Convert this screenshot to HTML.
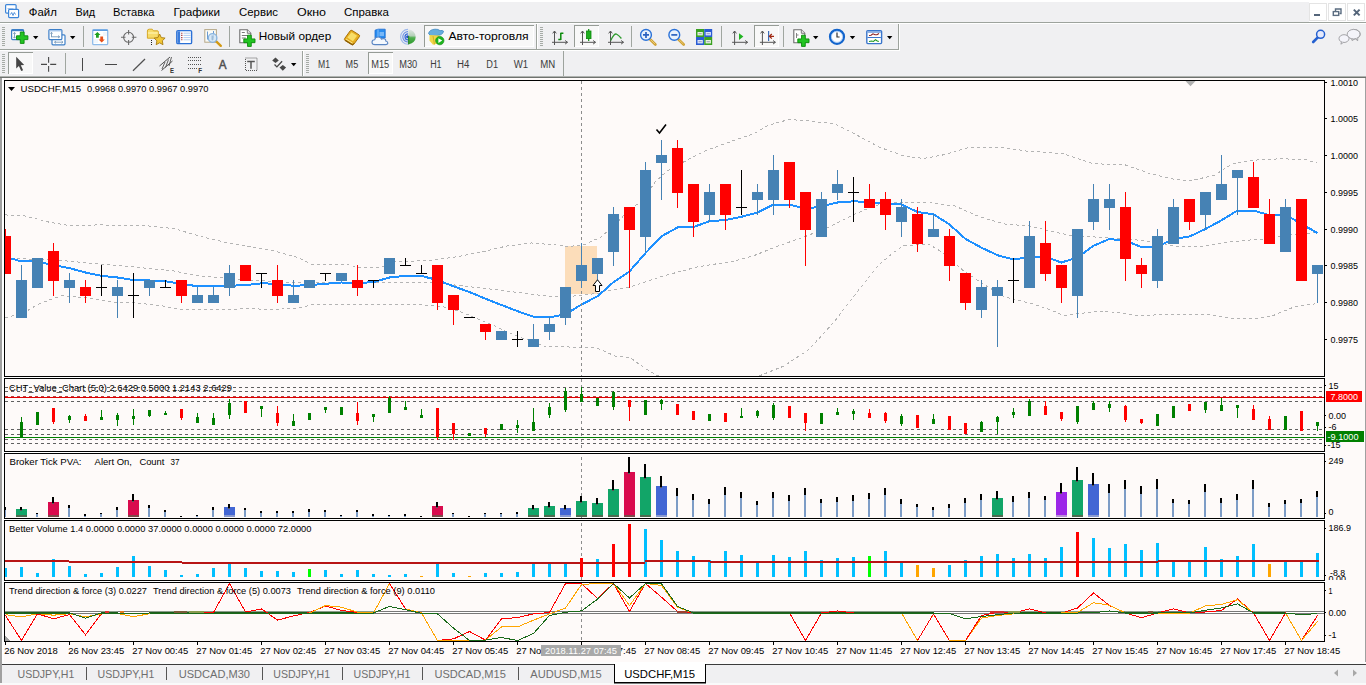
<!DOCTYPE html><html><head><meta charset="utf-8"><title>USDCHF,M15</title><style>html,body{margin:0;padding:0;background:#f0f0f0}body{width:1366px;height:685px;overflow:hidden}svg{display:block;font-family:"Liberation Sans",sans-serif}text{white-space:pre}</style></head><body><svg width="1366" height="685" viewBox="0 0 1366 685"><rect x="0" y="0" width="1366" height="685" fill="#f0f0f2"/><rect x="0" y="0" width="1366" height="2" fill="#ffffff"/><rect x="1309" y="0" width="57" height="22" fill="#ffffff"/><rect x="1309.5" y="3.5" width="17" height="17" fill="#fff" stroke="#e4e4e4" stroke-width="1"/><rect x="1328.5" y="3.5" width="17" height="17" fill="#fff" stroke="#e4e4e4" stroke-width="1"/><rect x="1347.5" y="3.5" width="17" height="17" fill="#fff" stroke="#e4e4e4" stroke-width="1"/><rect x="1314" y="14" width="6" height="2" fill="#54657a"/><g fill="none" stroke="#5a6c80" stroke-width="1.4"><path d="M1335.5,11 V9 H1341 V13.5 H1339.5"/><rect x="1333.3" y="11.6" width="5.4" height="3.8"/></g><path d="M1353.8,9.6 L1359.6,15.4 M1359.6,9.6 L1353.8,15.4" stroke="#54657a" stroke-width="2" fill="none"/><rect x="0" y="22" width="1366" height="1" fill="#9da39d"/><rect x="0" y="23" width="1366" height="1" fill="#ffffff"/><g fill="#fff" stroke="#3d85d8" stroke-width="1.2"><rect x="5.6" y="4.6" width="10.5" height="8.5" rx="1"/><rect x="8.6" y="9.3" width="10" height="8.3" rx="1"/></g><path d="M10.5,14.5 l1.2,-2 l1.3,3 l1.3,-3 l1.2,2" fill="none" stroke="#3d85d8" stroke-width="0.9"/><path d="M7.5,8.5 h6" stroke="#8ab4e8" stroke-width="0.8" fill="none"/><text x="28.8" y="15.7" font-size="11.6" fill="#000" textLength="28" lengthAdjust="spacingAndGlyphs">Файл</text><text x="75.5" y="15.7" font-size="11.6" fill="#000" textLength="19.7" lengthAdjust="spacingAndGlyphs">Вид</text><text x="113" y="15.7" font-size="11.6" fill="#000" textLength="41.5" lengthAdjust="spacingAndGlyphs">Вставка</text><text x="173.5" y="15.7" font-size="11.6" fill="#000" textLength="46.5" lengthAdjust="spacingAndGlyphs">Графики</text><text x="239" y="15.7" font-size="11.6" fill="#000" textLength="39" lengthAdjust="spacingAndGlyphs">Сервис</text><text x="297" y="15.7" font-size="11.6" fill="#000" textLength="29" lengthAdjust="spacingAndGlyphs">Окно</text><text x="344" y="15.7" font-size="11.6" fill="#000" textLength="45" lengthAdjust="spacingAndGlyphs">Справка</text><rect x="0" y="49" width="899" height="1" fill="#9da39d"/><rect x="0" y="50" width="899" height="1" fill="#ffffff"/><rect x="536" y="24" width="1" height="25" fill="#9da39d"/><rect x="537" y="24" width="1" height="25" fill="#fff"/><rect x="898" y="24" width="1" height="26" fill="#9da39d"/><rect x="899" y="24" width="1" height="27" fill="#fff"/><rect x="2" y="27" width="3" height="1" fill="#a6aba6"/><rect x="2" y="29" width="3" height="1" fill="#a6aba6"/><rect x="2" y="31" width="3" height="1" fill="#a6aba6"/><rect x="2" y="33" width="3" height="1" fill="#a6aba6"/><rect x="2" y="35" width="3" height="1" fill="#a6aba6"/><rect x="2" y="37" width="3" height="1" fill="#a6aba6"/><rect x="2" y="39" width="3" height="1" fill="#a6aba6"/><rect x="2" y="41" width="3" height="1" fill="#a6aba6"/><rect x="2" y="43" width="3" height="1" fill="#a6aba6"/><rect x="2" y="45" width="3" height="1" fill="#a6aba6"/><rect x="540" y="27" width="3" height="1" fill="#a6aba6"/><rect x="540" y="29" width="3" height="1" fill="#a6aba6"/><rect x="540" y="31" width="3" height="1" fill="#a6aba6"/><rect x="540" y="33" width="3" height="1" fill="#a6aba6"/><rect x="540" y="35" width="3" height="1" fill="#a6aba6"/><rect x="540" y="37" width="3" height="1" fill="#a6aba6"/><rect x="540" y="39" width="3" height="1" fill="#a6aba6"/><rect x="540" y="41" width="3" height="1" fill="#a6aba6"/><rect x="540" y="43" width="3" height="1" fill="#a6aba6"/><rect x="540" y="45" width="3" height="1" fill="#a6aba6"/><rect x="11.6" y="29.6" width="12" height="10" rx="1" fill="#fff" stroke="#3d7fc8" stroke-width="1.2"/><rect x="11.6" y="29.6" width="12" height="1.6" fill="#3d7fc8"/><path d="M14.5,32.5 v5.5 M13.3,33.8 l1.2,-1.4 l1.2,1.4 M13.3,36.8 l1.2,1.4 l1.2,-1.4" stroke="#7898b8" stroke-width="0.9" fill="none"/><path d="M20.3,32 h3.8000000000000003 v3.8000000000000003 h3.8000000000000003 v3.8000000000000003 h-3.8000000000000003 v3.8000000000000003 h-3.8000000000000003 v-3.8000000000000003 h-3.8000000000000003 v-3.8000000000000003 h3.8000000000000003 z" fill="#22c422" stroke="#0a8a0a" stroke-width="0.9"/><polygon points="33,36 38.4,36 35.7,39.2" fill="#000"/><g fill="#fff" stroke="#3d7fc8" stroke-width="1.2"><rect x="52" y="34.8" width="13" height="10" rx="1"/><rect x="48.9" y="29.6" width="13" height="10" rx="1"/></g><rect x="49.5" y="30.2" width="11.8" height="1.2" fill="#9cc0ea"/><path d="M51,36.8 h8.6 M58,35.6 l1.7,1.2 l-1.7,1.2 M51.5,32.4 v4.6 M50.4,33.6 l1.1,-1.3 l1.1,1.3" stroke="#7898b8" stroke-width="0.9" fill="none"/><path d="M54.5,42.2 h8.5 M56,41 l-1.5,1.2 l1.5,1.2 M61.5,41 l1.5,1.2 l-1.5,1.2" stroke="#7898b8" stroke-width="0.9" fill="none"/><polygon points="70,36 75.4,36 72.7,39.2" fill="#000"/><rect x="83" y="26" width="1" height="21" fill="#a0a6a0"/><rect x="92.7" y="29.6" width="15" height="15" rx="1.2" fill="#fff" stroke="#8ebbea" stroke-width="1.3"/><rect x="92.7" y="29.6" width="15" height="1.4" fill="#5e9de0"/><path d="M97.4,32 l3.1,3 h-1.7 v2.7 h-2.8 v-2.7 h-1.7 z" fill="#1fa01f"/><path d="M101.7,42.5 l3.1,-3 h-1.7 v-2.9 h-2.8 v2.9 h-1.7 z" fill="#e8501a"/><path d="M103.5,33 h3 M103.5,35 h3 M94.5,40 h3 M94.5,42 h3" stroke="#b8d4f0" stroke-width="0.8" stroke-dasharray="1 1"/><g fill="none" stroke="#6a6a6a" stroke-width="1.1"><circle cx="128.6" cy="37.3" r="5"/><path d="M128.6,30 v4.5 M128.6,40 v5 M121,37.3 h4.5 M131.8,37.3 h4.6"/></g><path d="M147.4,31 q0,-1.8 1.8,-1.8 h3 l1.3,1.6 h4 q0.8,0 0.8,0.8 v6.6 h-10.9 z" fill="#f7dc6a" stroke="#d6a828" stroke-width="1"/><path d="M147.9,33 h10" stroke="#fff3b0" stroke-width="1.2"/><path d="M159.6,34 l1.7,3.6 l3.8,0.5 l-2.8,2.7 l0.7,3.9 l-3.4,-1.9 l-3.4,1.9 l0.7,-3.9 l-2.8,-2.7 l3.8,-0.5 z" fill="#f2c838" stroke="#a87c10" stroke-width="0.9"/><path d="M151.5,40 v5.5" stroke="#222" stroke-width="1" stroke-dasharray="1 1"/><rect x="176.8" y="30.6" width="14.8" height="13" rx="1.2" fill="#fff" stroke="#2a70d6" stroke-width="1.4"/><rect x="177.5" y="31.3" width="2.6" height="11.6" fill="#3a7cdc"/><path d="M183.5,33.2 h7 M183.5,35.4 h7 M183.5,37.6 h7 M183.5,39.8 h7" stroke="#9cc0ee" stroke-width="0.8"/><path d="M181.2,33.2 h1.2 M181.2,35.4 h1.2 M181.2,37.6 h1.2 M181.2,39.8 h1.2" stroke="#a02020" stroke-width="1.1"/><rect x="204.8" y="29.6" width="11.6" height="12.6" fill="#fbfbf6" stroke="#b6a888" stroke-width="1"/><path d="M207.5,31.5 v8 M213.5,31 v7" stroke="#6a9ad0" stroke-width="1"/><path d="M216.2,41.4 l4.6,4.4" stroke="#d49a14" stroke-width="2.4" stroke-linecap="round"/><circle cx="212.6" cy="38" r="4.3" fill="#cfe4f6" fill-opacity="0.85" stroke="#88b4e0" stroke-width="1.3"/><path d="M211.5,35.5 v4 q1,2 2,0 v-4" fill="#9ebcd8" stroke="none"/><rect x="229" y="26" width="1" height="21" fill="#a0a6a0"/><path d="M239.8,29.8 h7.5 l3.5,3.5 v9.5 h-11 z" fill="#fff" stroke="#6e6e6e" stroke-width="1.1"/><path d="M247.3,29.8 v3.5 h3.5" fill="#e8e8e8" stroke="#6e6e6e" stroke-width="0.9"/><path d="M241.8,32.5 h3 M241.8,35.5 h6 M241.8,38 h4" stroke="#787878" stroke-width="1"/><path d="M247.53333333333333,35.2 h3.733333333333333 v3.733333333333333 h3.733333333333333 v3.733333333333333 h-3.733333333333333 v3.733333333333333 h-3.733333333333333 v-3.733333333333333 h-3.733333333333333 v-3.733333333333333 h3.733333333333333 z" fill="#22c422" stroke="#0a8a0a" stroke-width="0.9"/><text x="258.8" y="39.9" font-size="11.6" fill="#000" textLength="72.4" lengthAdjust="spacingAndGlyphs">Новый ордер</text><path d="M344.6,38.6 l5.6,-7.8 q0.8,-0.9 1.9,-0.3 l7,4.4 q0.9,0.8 0.3,1.8 l-5.6,7.6 q-0.8,0.9 -1.9,0.4 l-7,-4.3 q-0.9,-0.8 -0.3,-1.8 z" fill="#e6ae20" stroke="#a8720a" stroke-width="1"/><path d="M347.3,37.6 l4.2,-5.4 l5.6,3.6 l-4.2,5.4 z" fill="#f8de68"/><path d="M345.2,40.2 l7.2,4.6 l1.2,-1.4" stroke="#8a5c06" stroke-width="1.2" fill="none"/><path d="M346,39 l6.6,4.2" stroke="#fff0a8" stroke-width="0.8"/><path d="M375,30.2 l3,-1 h7.2 v8.8 h-10.2 z" fill="#2a8df0" stroke="#1a6cd0" stroke-width="0.8"/><path d="M378,29.4 v8" stroke="#9fd0ff" stroke-width="0.8"/><path d="M379.5,33 h4.5 M379.5,35 h4.5" stroke="#d8ecff" stroke-width="0.9"/><path d="M375,44.6 q-3,0 -3,-2.4 q0,-2.2 2.6,-2.4 q0.6,-2.8 3.6,-2.8 q2.6,0 3.4,2.2 q1.2,-1 2.8,-0.4 q1.6,0.6 1.4,2.2 q2,0.4 2,2 q0,1.6 -2.2,1.6 z" fill="#f4f8fd" stroke="#5a86c4" stroke-width="1.1"/><defs><linearGradient id="sg" x1="0" y1="0" x2="0" y2="1"><stop offset="0" stop-color="#dfe6e4"/><stop offset="0.42" stop-color="#b4d0b8"/><stop offset="0.56" stop-color="#4fae4f"/><stop offset="1" stop-color="#2f9a2f"/></linearGradient></defs><path d="M408.4,29.6 A7.3,7.3 0 0 1 408.4,44.2 Z" fill="url(#sg)"/><g fill="none" stroke="#3a6cd8"><path d="M408,29.4 A7.4,7.4 0 0 0 408,44.2" stroke="#9cb8ec" stroke-width="1.1"/><path d="M408,31.6 A5.2,5.2 0 0 0 408,42" stroke="#6a90e4" stroke-width="1.2"/><path d="M408,33.8 A3,3 0 0 0 408,39.8" stroke-width="1.3"/></g><circle cx="407.6" cy="36.8" r="1.5" fill="#2050c8"/><path d="M408.6,36 v8.4" stroke="#2e8a2e" stroke-width="1.3"/><rect x="424" y="25" width="110" height="22" fill="#f8f8f8"/><rect x="424" y="25" width="110" height="1" fill="#969c96"/><rect x="424" y="25" width="1" height="22" fill="#969c96"/><rect x="533" y="26" width="1" height="21" fill="#fff"/><rect x="425" y="46" width="109" height="1" fill="#fff"/><path d="M428.5,33.5 q1,-4 6.5,-4.3 q3.5,-0.3 5,1.5 q2.5,-0.8 3.6,0.6 q-0.5,2.5 -3,3.5 l-7,1.5 q-4,-0.4 -5.1,-2.8 z" fill="#66aede" stroke="#3c86c0" stroke-width="0.8"/><path d="M429.5,35 l10,0.5 l-1.5,8 l-5,1.2 l-3.5,-4 z" fill="#f0d648"/><path d="M433,36 l1.5,8.5" stroke="#c8a820" stroke-width="0.8"/><circle cx="439.8" cy="40.6" r="4.2" fill="#1fb41f" stroke="#128a12" stroke-width="0.6"/><path d="M438.4,38.2 v4.8 l3.8,-2.4 z" fill="#fff"/><text x="448.4" y="39.9" font-size="11.6" fill="#000" textLength="80.2" lengthAdjust="spacingAndGlyphs">Авто-торговля</text><g stroke="#555" stroke-width="1" fill="none"><path d="M554.5,31 v14 M552.0,42.3 h15.5"/><path d="M552.7,33.4 l1.8,-2.4 l1.8,2.4 M565.1,40.5 l2.4,1.8 l-2.4,1.8"/></g><path d="M560.8,32.8 v7.2 M558.3,39.5 h2.5 M560.8,33.3 h2.6" stroke="#0a8a0a" stroke-width="1.5" fill="none"/><rect x="574" y="25" width="25" height="22" fill="#f8f8f8"/><rect x="574" y="25" width="25" height="1" fill="#969c96"/><rect x="574" y="25" width="1" height="22" fill="#969c96"/><rect x="598" y="26" width="1" height="21" fill="#fff"/><rect x="575" y="46" width="24" height="1" fill="#fff"/><g stroke="#555" stroke-width="1" fill="none"><path d="M582.5,31 v14 M580.0,42.3 h15.5"/><path d="M580.7,33.4 l1.8,-2.4 l1.8,2.4 M593.1,40.5 l2.4,1.8 l-2.4,1.8"/></g><path d="M588.7,29 v12" stroke="#0a8a0a" stroke-width="1.2"/><rect x="586.5" y="31" width="4.5" height="7.6" fill="#1fae1f" stroke="#0a8a0a" stroke-width="0.8"/><g stroke="#555" stroke-width="1" fill="none"><path d="M610.5,31 v14 M608.0,42.3 h15.5"/><path d="M608.7,33.4 l1.8,-2.4 l1.8,2.4 M621.1,40.5 l2.4,1.8 l-2.4,1.8"/></g><path d="M610.8,40.5 q3.5,-8 6,-6.2 q2,1.2 4.6,4.2" stroke="#2e9a2e" stroke-width="1.3" fill="none"/><rect x="631" y="26" width="1" height="21" fill="#a0a6a0"/><path d="M650,39.3 l5.4,5.2" stroke="#cfa030" stroke-width="2.6" stroke-linecap="round"/><path d="M650.4,39.5 l4.8,4.6" stroke="#f0d890" stroke-width="0.8"/><circle cx="646" cy="34.9" r="5.4" fill="#e8f2fc" stroke="#2a72d8" stroke-width="1.4"/><path d="M643,34.9 h6 M646,31.9 v6" stroke="#2a62c0" stroke-width="1.7"/><path d="M678.3,39.3 l5.4,5.2" stroke="#cfa030" stroke-width="2.6" stroke-linecap="round"/><path d="M678.6999999999999,39.5 l4.8,4.6" stroke="#f0d890" stroke-width="0.8"/><circle cx="674.3" cy="34.9" r="5.4" fill="#e8f2fc" stroke="#2a72d8" stroke-width="1.4"/><path d="M671.3,34.9 h6" stroke="#2a62c0" stroke-width="1.7"/><rect x="696" y="29" width="8.2" height="8" fill="#3aa222"/><rect x="704.2" y="29" width="8" height="8" fill="#2a5cd4"/><rect x="696" y="37" width="8.2" height="8" fill="#2a5cd4"/><rect x="704.2" y="37" width="8" height="8" fill="#3aa222"/><rect x="697.5" y="32" width="5.3" height="3.4" fill="#e8f4e0"/><rect x="705.6" y="32" width="5.3" height="3.4" fill="#dce6fb"/><rect x="697.5" y="40" width="5.3" height="3.4" fill="#dce6fb"/><rect x="705.6" y="40" width="5.3" height="3.4" fill="#e8f4e0"/><path d="M698.5,33.7 h3.3 M706.6,33.7 h3.3 M698.5,41.7 h3.3 M706.6,41.7 h3.3" stroke="#88a" stroke-width="0.8"/><rect x="721" y="26" width="1" height="21" fill="#a0a6a0"/><g stroke="#555" stroke-width="1" fill="none"><path d="M734.6,31 v14 M732.1,42.3 h15.5"/><path d="M732.8000000000001,33.4 l1.8,-2.4 l1.8,2.4 M745.2,40.5 l2.4,1.8 l-2.4,1.8"/></g><path d="M739,33.2 v6.8 l4.4,-3.4 z" fill="#22b422"/><rect x="754" y="25" width="25" height="22" fill="#f8f8f8"/><rect x="754" y="25" width="25" height="1" fill="#969c96"/><rect x="754" y="25" width="1" height="22" fill="#969c96"/><rect x="778" y="26" width="1" height="21" fill="#fff"/><rect x="755" y="46" width="24" height="1" fill="#fff"/><g stroke="#555" stroke-width="1" fill="none"><path d="M762.4,31 v14 M759.9,42.3 h15.5"/><path d="M760.6,33.4 l1.8,-2.4 l1.8,2.4 M773.0,40.5 l2.4,1.8 l-2.4,1.8"/></g><path d="M768.6,31 v10" stroke="#3a6cb8" stroke-width="1.2"/><path d="M774,36.3 h-4.6 M771.8,34 l-2.4,2.3 l2.4,2.3" stroke="#a02812" stroke-width="1.2" fill="none"/><rect x="783" y="26" width="1" height="21" fill="#a0a6a0"/><path d="M793.8,29.8 h7.5 l3.5,3.5 v9.5 h-11 z" fill="#fff" stroke="#6e6e6e" stroke-width="1.1"/><path d="M801.3,29.8 v3.5 h3.5" fill="#e8e8e8" stroke="#6e6e6e" stroke-width="0.9"/><path d="M796.5,33 v5 M796.5,35 h2" stroke="#787878" stroke-width="0.9" fill="none"/><path d="M801.5333333333333,35.2 h3.733333333333333 v3.733333333333333 h3.733333333333333 v3.733333333333333 h-3.733333333333333 v3.733333333333333 h-3.733333333333333 v-3.733333333333333 h-3.733333333333333 v-3.733333333333333 h3.733333333333333 z" fill="#22c422" stroke="#0a8a0a" stroke-width="0.9"/><polygon points="813,36 818.4,36 815.7,39.2" fill="#000"/><circle cx="837" cy="36.8" r="7" fill="#fdfdff" stroke="#1264cc" stroke-width="2.2"/><circle cx="837" cy="36.8" r="5.6" fill="none" stroke="#9cc4f4" stroke-width="0.8"/><path d="M837,32.6 v4.4 h2.6" stroke="#333" stroke-width="1.2" fill="none"/><polygon points="849.8,36 855.1999999999999,36 852.5,39.2" fill="#000"/><rect x="866.8" y="30.6" width="14.8" height="13" rx="1" fill="#fff" stroke="#3a76cc" stroke-width="1.4"/><rect x="867.5" y="31.2" width="13.4" height="1.6" fill="#7aa4de"/><path d="M867.5,37.5 h13.4" stroke="#3a76cc" stroke-width="1"/><path d="M869,35.5 l2,-0.3 l2,-1.4 l2,0.9 l2,0 l2,-1.2" stroke="#8a2020" stroke-width="1.1" fill="none"/><path d="M869,41.5 l2.5,-0.5 l2,0.5 l2,-1.8 l1.8,1.2 l1.5,0.6" stroke="#1f9a1f" stroke-width="1.1" fill="none"/><polygon points="887,36 892.4,36 889.7,39.2" fill="#000"/><path d="M1317.8,37.4 l-4.6,4.6" stroke="#2460d0" stroke-width="2.6" stroke-linecap="round"/><circle cx="1320.6" cy="34.3" r="4" fill="#e6eafc" stroke="#2460d0" stroke-width="1.5"/><g fill="#f4f4fa" stroke="#a4a4a8" stroke-width="1"><path d="M1353.6,29.4 a6.4,4.8 0 1 1 -2,9.3 l0.6,2 l2.4,-1.8 a6.4,4.8 0 0 0 -1,-9.5 z"/><ellipse cx="1353.6" cy="34.2" rx="6.4" ry="4.8"/><path d="M1356,38.6 l1.6,2.4 l0.2,-2.8" /><ellipse cx="1344" cy="38.6" rx="5" ry="3.9"/><path d="M1341.5,41.8 l-0.6,2.4 l2.6,-1.9"/></g><rect x="302" y="51" width="1" height="25" fill="#9da39d"/><rect x="303" y="51" width="1" height="25" fill="#fff"/><rect x="563" y="51" width="1" height="25" fill="#9da39d"/><rect x="2" y="54" width="3" height="1" fill="#a6aba6"/><rect x="2" y="56" width="3" height="1" fill="#a6aba6"/><rect x="2" y="58" width="3" height="1" fill="#a6aba6"/><rect x="2" y="60" width="3" height="1" fill="#a6aba6"/><rect x="2" y="62" width="3" height="1" fill="#a6aba6"/><rect x="2" y="64" width="3" height="1" fill="#a6aba6"/><rect x="2" y="66" width="3" height="1" fill="#a6aba6"/><rect x="2" y="68" width="3" height="1" fill="#a6aba6"/><rect x="2" y="70" width="3" height="1" fill="#a6aba6"/><rect x="2" y="72" width="3" height="1" fill="#a6aba6"/><rect x="306" y="54" width="3" height="1" fill="#a6aba6"/><rect x="306" y="56" width="3" height="1" fill="#a6aba6"/><rect x="306" y="58" width="3" height="1" fill="#a6aba6"/><rect x="306" y="60" width="3" height="1" fill="#a6aba6"/><rect x="306" y="62" width="3" height="1" fill="#a6aba6"/><rect x="306" y="64" width="3" height="1" fill="#a6aba6"/><rect x="306" y="66" width="3" height="1" fill="#a6aba6"/><rect x="306" y="68" width="3" height="1" fill="#a6aba6"/><rect x="306" y="70" width="3" height="1" fill="#a6aba6"/><rect x="306" y="72" width="3" height="1" fill="#a6aba6"/><rect x="8" y="52" width="25" height="22" fill="#f8f8f8"/><rect x="8" y="52" width="25" height="1" fill="#969c96"/><rect x="8" y="52" width="1" height="22" fill="#969c96"/><rect x="32" y="53" width="1" height="21" fill="#fff"/><rect x="9" y="73" width="24" height="1" fill="#fff"/><path d="M16.2,56.8 v11.6 l2.7,-2.5 l2.3,5.2 l1.9,-0.9 l-2.3,-5 l3.4,-0.3 z" fill="#454545"/><path d="M48.6,57 v5.8 M48.6,66 v5.8 M41,64.4 h6 M50.2,64.4 h6" stroke="#484848" stroke-width="1.1" fill="none"/><rect x="65" y="53" width="1" height="21" fill="#a0a6a0"/><rect x="82" y="58" width="1" height="13" fill="#484848"/><rect x="105" y="64" width="12" height="1" fill="#484848"/><path d="M133,70.8 L145,59" stroke="#505050" stroke-width="1.2"/><g stroke="#505050" stroke-width="1" fill="none"><path d="M159.5,66 L170,57 M161.5,70.5 L172.5,61"/><path d="M162,69 l3,-7 M165.5,67.5 l3,-8 M169,66 l2.5,-9" stroke-width="0.9"/></g><text x="170" y="72.8" font-size="6.5" fill="#333" textLength="4" lengthAdjust="spacingAndGlyphs" font-weight="bold">E</text><path d="M188,57.5 h13.5" stroke="#555" stroke-width="1" stroke-dasharray="1 1"/><path d="M188,60.5 h13.5" stroke="#555" stroke-width="1" stroke-dasharray="1 1"/><path d="M188,64.5 h13.5" stroke="#555" stroke-width="1" stroke-dasharray="1 1"/><path d="M188,68.5 h13.5" stroke="#555" stroke-width="1" stroke-dasharray="1 1"/><rect x="197" y="67" width="6" height="3" fill="#f0f0f2"/><text x="198.2" y="72.8" font-size="6.5" fill="#333" textLength="3.8" lengthAdjust="spacingAndGlyphs" font-weight="bold">F</text><text x="218.8" y="68.8" font-size="12" fill="#505050" textLength="7.8" lengthAdjust="spacingAndGlyphs" stroke="#505050" stroke-width="0.5">A</text><rect x="245.5" y="58" width="11.5" height="12.5" fill="none" stroke="#555" stroke-width="1" stroke-dasharray="1 1"/><path d="M247.2,61.6 h7.6 M251,61.6 v7.2" stroke="#555" stroke-width="1.5" fill="none"/><path d="M275.5,57.5 l3.3,3 l-3.3,2.4 l-3.3,-2.4 z M282.8,65 l3.3,2.6 l-3.3,3.2 l-3.3,-3.2 z" fill="#484848"/><path d="M274.5,64.5 l2.4,2.4 l5.2,-5.6" stroke="#484848" stroke-width="1.3" fill="none"/><polygon points="291,63 296.4,63 293.7,66.2" fill="#000"/><rect x="368" y="52" width="25" height="22" fill="#f8f8f8"/><rect x="368" y="52" width="25" height="1" fill="#969c96"/><rect x="368" y="52" width="1" height="22" fill="#969c96"/><rect x="392" y="53" width="1" height="21" fill="#fff"/><rect x="369" y="73" width="24" height="1" fill="#fff"/><text x="318" y="68" font-size="10" fill="#3c3c3c" textLength="12" lengthAdjust="spacingAndGlyphs">M1</text><text x="345.6" y="68" font-size="10" fill="#3c3c3c" textLength="12.6" lengthAdjust="spacingAndGlyphs">M5</text><text x="371.2" y="68" font-size="10" fill="#3c3c3c" textLength="18" lengthAdjust="spacingAndGlyphs">M15</text><text x="399.2" y="68" font-size="10" fill="#3c3c3c" textLength="18" lengthAdjust="spacingAndGlyphs">M30</text><text x="430.2" y="68" font-size="10" fill="#3c3c3c" textLength="11.4" lengthAdjust="spacingAndGlyphs">H1</text><text x="457" y="68" font-size="10" fill="#3c3c3c" textLength="12.4" lengthAdjust="spacingAndGlyphs">H4</text><text x="486.3" y="68" font-size="10" fill="#3c3c3c" textLength="11.8" lengthAdjust="spacingAndGlyphs">D1</text><text x="513.7" y="68" font-size="10" fill="#3c3c3c" textLength="14.4" lengthAdjust="spacingAndGlyphs">W1</text><text x="540.3" y="68" font-size="10" fill="#3c3c3c" textLength="15" lengthAdjust="spacingAndGlyphs">MN</text><rect x="0" y="76" width="1366" height="1" fill="#b0b3b0"/><rect x="0" y="77" width="1366" height="1" fill="#6e726e"/><rect x="0" y="78" width="1366" height="586" fill="#fefaf9"/><rect x="0" y="78" width="2" height="586" fill="#a0a0a0"/><rect x="2" y="78" width="2" height="586" fill="#ffffff"/><rect x="1365" y="78" width="1" height="586" fill="#a0a0a0"/><defs><clipPath id="cm"><rect x="5" y="81" width="1319" height="295"/></clipPath><clipPath id="c4"><rect x="5" y="583" width="1319" height="58"/></clipPath></defs><g shape-rendering="crispEdges"><rect x="565" y="246" width="32" height="48" fill="#fcddba"/><g clip-path="url(#cm)"><polyline points="5.0,214.9 25.0,216.0 50.0,222.4 72.0,226.0 99.5,224.8 124.0,225.6 149.0,226.0 174.0,228.6 199.0,236.0 224.0,242.0 249.0,246.7 274.0,251.0 298.7,257.7 311.0,264.0 345.0,264.0 357.0,267.0 382.0,267.0 394.7,261.7 432.0,260.4 457.0,256.7 482.0,252.0 506.7,246.0 531.5,243.0 556.4,245.0 569.0,246.7 586.0,244.0 601.0,237.0 618.0,222.0 630.0,208.0 642.0,202.0 655.0,182.0 667.0,171.0 683.5,162.0 704.7,151.0 729.5,142.0 754.0,133.6 769.0,125.0 789.0,119.5 809.0,121.0 834.0,123.7 854.0,133.6 879.0,147.0 904.0,156.0 923.7,158.5 943.6,154.8 970.0,147.0 1000.0,147.0 1026.0,151.0 1063.0,153.7 1093.0,163.6 1125.5,165.0 1150.0,173.6 1170.0,178.6 1190.0,181.0 1215.0,175.0 1232.6,163.6 1250.0,160.4 1282.0,158.7 1307.0,160.0 1317.0,163.0" fill="none" stroke="#b4b4b4" stroke-width="1" stroke-dasharray="3 3"/><polyline points="5.0,258.0 60.0,260.4 99.5,264.0 124.0,266.0 174.0,271.0 199.0,276.0 250.0,280.0 298.7,283.0 340.0,282.0 370.0,282.0 430.0,282.0 450.0,284.5 494.0,289.5 544.0,295.8 565.0,297.0 597.0,293.5 606.0,290.8 630.0,287.0 659.6,277.0 697.0,267.0 734.0,261.0 754.0,255.6 779.0,245.6 804.0,237.0 829.0,227.0 854.0,214.5 869.0,208.0 879.0,204.6 904.0,202.0 929.0,202.6 955.0,206.0 980.0,217.0 1004.7,224.0 1029.5,226.0 1054.0,232.0 1069.0,235.0 1104.0,237.7 1134.0,239.7 1154.0,242.0 1179.0,246.7 1204.0,246.0 1228.7,242.0 1253.5,239.7 1270.0,239.0 1287.0,234.6 1317.0,232.6" fill="none" stroke="#b4b4b4" stroke-width="1" stroke-dasharray="3 3"/><polyline points="5.0,318.0 25.0,312.0 37.0,305.0 50.0,299.5 62.0,295.8 87.0,298.0 112.0,302.0 137.0,303.0 162.0,305.7 179.0,309.5 211.5,310.0 249.0,308.7 274.0,309.5 298.7,308.0 311.0,305.0 340.0,304.0 370.0,304.0 419.5,304.5 444.0,307.0 459.0,311.0 479.0,319.4 494.0,325.6 511.6,334.0 544.0,346.0 569.0,347.0 597.0,348.0 615.0,356.0 630.0,357.5 644.6,368.0 656.0,375.0 700.0,392.0 761.6,375.0 784.0,366.0 809.0,349.5 834.0,322.0 858.7,290.0 878.6,265.0 893.5,252.5 904.0,245.6 929.0,244.4 942.0,252.0 955.0,263.0 962.0,269.6 980.0,282.0 1004.7,297.0 1029.5,303.0 1049.5,309.4 1064.0,315.6 1084.0,313.0 1104.0,311.0 1129.0,314.0 1141.5,316.0 1166.0,314.0 1204.0,314.0 1228.7,318.0 1253.5,319.0 1272.0,316.0 1294.0,307.0 1317.0,303.5" fill="none" stroke="#b4b4b4" stroke-width="1" stroke-dasharray="3 3"/><polyline points="11.0,258.4 21.5,261.4 37.5,261.5 53.5,265.2 69.5,268.1 85.5,272.5 101.5,275.9 117.5,277.5 133.5,280.1 149.5,280.5 165.5,281.3 181.5,283.8 197.5,286.3 213.5,286.3 229.5,285.8 245.5,285.1 261.5,283.3 277.5,283.8 293.5,285.8 309.5,285.1 325.5,283.8 341.5,282.5 357.5,283.1 373.5,282.1 389.5,277.5 405.5,275.9 421.5,275.9 437.5,280.1 453.5,286.3 469.5,292.0 485.5,298.8 501.5,305.0 517.5,311.2 533.5,316.7 549.5,317.5 565.5,314.2 581.5,304.5 597.5,296.3 613.5,282.1 629.5,271.4 645.5,253.1 661.5,236.2 677.5,227.5 693.5,227.0 709.5,221.2 725.5,220.0 741.5,216.8 757.5,212.5 773.5,204.5 789.5,204.5 805.5,208.8 821.5,206.3 837.5,202.5 853.5,201.3 869.5,202.1 885.5,203.8 901.5,204.5 917.5,212.0 933.5,214.3 949.5,224.5 965.5,238.9 981.5,247.7 997.5,255.2 1013.5,259.5 1029.5,256.9 1045.5,256.9 1061.5,262.5 1077.5,257.5 1093.5,245.7 1109.5,239.0 1125.5,240.7 1141.5,247.2 1157.5,246.5 1173.5,239.0 1189.5,236.5 1205.5,229.0 1221.5,220.3 1237.5,210.5 1253.5,210.5 1269.5,215.2 1285.5,214.7 1301.5,223.9 1317.5,233.1" fill="none" stroke="#1e90ff" stroke-width="2"/><line x1="581.5" y1="81" x2="581.5" y2="376" stroke="#8c8c8c" stroke-width="1" stroke-dasharray="3 3"/><rect x="5" y="229" width="1" height="45" fill="#ff0000"/><rect x="0" y="236" width="11" height="38" fill="#ff0000"/><rect x="21" y="265" width="1" height="53" fill="#4682b4"/><rect x="16" y="280" width="11" height="38" fill="#4682b4"/><rect x="37" y="258" width="1" height="30" fill="#4682b4"/><rect x="32" y="258" width="11" height="30" fill="#4682b4"/><rect x="53" y="243" width="1" height="53" fill="#ff0000"/><rect x="48" y="251" width="11" height="30" fill="#ff0000"/><rect x="69" y="273" width="1" height="30" fill="#4682b4"/><rect x="64" y="280" width="11" height="8" fill="#4682b4"/><rect x="85" y="280" width="1" height="23" fill="#ff0000"/><rect x="80" y="287" width="11" height="9" fill="#ff0000"/><rect x="101" y="265" width="1" height="31" fill="#000000"/><rect x="96" y="287" width="11" height="1" fill="#000000"/><rect x="117" y="280" width="1" height="38" fill="#4682b4"/><rect x="112" y="287" width="11" height="9" fill="#4682b4"/><rect x="133" y="273" width="1" height="45" fill="#000000"/><rect x="128" y="295" width="11" height="1" fill="#000000"/><rect x="149" y="280" width="1" height="16" fill="#4682b4"/><rect x="144" y="280" width="11" height="8" fill="#4682b4"/><rect x="165" y="280" width="1" height="8" fill="#000000"/><rect x="160" y="287" width="11" height="1" fill="#000000"/><rect x="181" y="280" width="1" height="23" fill="#ff0000"/><rect x="176" y="280" width="11" height="16" fill="#ff0000"/><rect x="197" y="287" width="1" height="16" fill="#4682b4"/><rect x="192" y="295" width="11" height="8" fill="#4682b4"/><rect x="213" y="287" width="1" height="16" fill="#4682b4"/><rect x="208" y="295" width="11" height="8" fill="#4682b4"/><rect x="229" y="265" width="1" height="31" fill="#4682b4"/><rect x="224" y="273" width="11" height="15" fill="#4682b4"/><rect x="245" y="265" width="1" height="16" fill="#ff0000"/><rect x="240" y="265" width="11" height="16" fill="#ff0000"/><rect x="261" y="273" width="1" height="15" fill="#000000"/><rect x="256" y="273" width="11" height="1" fill="#000000"/><rect x="277" y="265" width="1" height="38" fill="#ff0000"/><rect x="272" y="280" width="11" height="16" fill="#ff0000"/><rect x="293" y="280" width="1" height="23" fill="#4682b4"/><rect x="288" y="295" width="11" height="8" fill="#4682b4"/><rect x="309" y="280" width="1" height="8" fill="#4682b4"/><rect x="304" y="280" width="11" height="8" fill="#4682b4"/><rect x="325" y="273" width="1" height="8" fill="#000000"/><rect x="320" y="273" width="11" height="1" fill="#000000"/><rect x="341" y="273" width="1" height="8" fill="#4682b4"/><rect x="336" y="273" width="11" height="8" fill="#4682b4"/><rect x="357" y="265" width="1" height="31" fill="#ff0000"/><rect x="352" y="280" width="11" height="8" fill="#ff0000"/><rect x="373" y="280" width="1" height="8" fill="#000000"/><rect x="368" y="280" width="11" height="1" fill="#000000"/><rect x="389" y="258" width="1" height="16" fill="#4682b4"/><rect x="384" y="258" width="11" height="16" fill="#4682b4"/><rect x="405" y="258" width="1" height="8" fill="#000000"/><rect x="400" y="265" width="11" height="1" fill="#000000"/><rect x="421" y="265" width="1" height="9" fill="#000000"/><rect x="416" y="273" width="11" height="1" fill="#000000"/><rect x="437" y="265" width="1" height="45" fill="#ff0000"/><rect x="432" y="265" width="11" height="38" fill="#ff0000"/><rect x="453" y="295" width="1" height="30" fill="#ff0000"/><rect x="448" y="295" width="11" height="15" fill="#ff0000"/><rect x="469" y="317" width="1" height="1" fill="#000000"/><rect x="464" y="317" width="11" height="1" fill="#000000"/><rect x="485" y="324" width="1" height="16" fill="#ff0000"/><rect x="480" y="324" width="11" height="8" fill="#ff0000"/><rect x="501" y="331" width="1" height="9" fill="#4682b4"/><rect x="496" y="331" width="11" height="9" fill="#4682b4"/><rect x="517" y="331" width="1" height="16" fill="#000000"/><rect x="512" y="339" width="11" height="1" fill="#000000"/><rect x="533" y="324" width="1" height="23" fill="#4682b4"/><rect x="528" y="339" width="11" height="8" fill="#4682b4"/><rect x="549" y="317" width="1" height="23" fill="#4682b4"/><rect x="544" y="324" width="11" height="8" fill="#4682b4"/><rect x="565" y="287" width="1" height="38" fill="#4682b4"/><rect x="560" y="287" width="11" height="31" fill="#4682b4"/><rect x="581" y="243" width="1" height="45" fill="#4682b4"/><rect x="576" y="265" width="11" height="16" fill="#4682b4"/><rect x="597" y="258" width="1" height="23" fill="#4682b4"/><rect x="592" y="258" width="11" height="16" fill="#4682b4"/><rect x="613" y="207" width="1" height="59" fill="#4682b4"/><rect x="608" y="214" width="11" height="38" fill="#4682b4"/><rect x="629" y="207" width="1" height="81" fill="#ff0000"/><rect x="624" y="207" width="11" height="23" fill="#ff0000"/><rect x="645" y="162" width="1" height="90" fill="#4682b4"/><rect x="640" y="170" width="11" height="67" fill="#4682b4"/><rect x="661" y="140" width="1" height="60" fill="#4682b4"/><rect x="656" y="155" width="11" height="8" fill="#4682b4"/><rect x="677" y="140" width="1" height="68" fill="#ff0000"/><rect x="672" y="148" width="11" height="45" fill="#ff0000"/><rect x="693" y="184" width="1" height="53" fill="#ff0000"/><rect x="688" y="184" width="11" height="38" fill="#ff0000"/><rect x="709" y="184" width="1" height="38" fill="#4682b4"/><rect x="704" y="192" width="11" height="23" fill="#4682b4"/><rect x="725" y="184" width="1" height="46" fill="#ff0000"/><rect x="720" y="184" width="11" height="31" fill="#ff0000"/><rect x="741" y="170" width="1" height="45" fill="#000000"/><rect x="736" y="207" width="11" height="1" fill="#000000"/><rect x="757" y="184" width="1" height="31" fill="#4682b4"/><rect x="752" y="192" width="11" height="8" fill="#4682b4"/><rect x="773" y="155" width="1" height="60" fill="#4682b4"/><rect x="768" y="170" width="11" height="30" fill="#4682b4"/><rect x="789" y="162" width="1" height="46" fill="#ff0000"/><rect x="784" y="162" width="11" height="38" fill="#ff0000"/><rect x="805" y="192" width="1" height="74" fill="#ff0000"/><rect x="800" y="192" width="11" height="38" fill="#ff0000"/><rect x="821" y="192" width="1" height="45" fill="#4682b4"/><rect x="816" y="199" width="11" height="38" fill="#4682b4"/><rect x="837" y="170" width="1" height="30" fill="#4682b4"/><rect x="832" y="184" width="11" height="9" fill="#4682b4"/><rect x="853" y="177" width="1" height="45" fill="#000000"/><rect x="848" y="192" width="11" height="1" fill="#000000"/><rect x="869" y="184" width="1" height="24" fill="#ff0000"/><rect x="864" y="199" width="11" height="9" fill="#ff0000"/><rect x="885" y="192" width="1" height="38" fill="#ff0000"/><rect x="880" y="199" width="11" height="16" fill="#ff0000"/><rect x="901" y="199" width="1" height="38" fill="#4682b4"/><rect x="896" y="207" width="11" height="15" fill="#4682b4"/><rect x="917" y="207" width="1" height="45" fill="#ff0000"/><rect x="912" y="214" width="11" height="30" fill="#ff0000"/><rect x="933" y="214" width="1" height="23" fill="#4682b4"/><rect x="928" y="229" width="11" height="8" fill="#4682b4"/><rect x="949" y="229" width="1" height="52" fill="#ff0000"/><rect x="944" y="236" width="11" height="30" fill="#ff0000"/><rect x="965" y="273" width="1" height="37" fill="#ff0000"/><rect x="960" y="273" width="11" height="30" fill="#ff0000"/><rect x="981" y="280" width="1" height="38" fill="#4682b4"/><rect x="976" y="287" width="11" height="23" fill="#4682b4"/><rect x="997" y="280" width="1" height="67" fill="#4682b4"/><rect x="992" y="287" width="11" height="9" fill="#4682b4"/><rect x="1013" y="258" width="1" height="45" fill="#000000"/><rect x="1008" y="280" width="11" height="1" fill="#000000"/><rect x="1029" y="221" width="1" height="67" fill="#4682b4"/><rect x="1024" y="236" width="11" height="52" fill="#4682b4"/><rect x="1045" y="221" width="1" height="60" fill="#ff0000"/><rect x="1040" y="243" width="11" height="31" fill="#ff0000"/><rect x="1061" y="265" width="1" height="38" fill="#ff0000"/><rect x="1056" y="265" width="11" height="23" fill="#ff0000"/><rect x="1077" y="229" width="1" height="89" fill="#4682b4"/><rect x="1072" y="229" width="11" height="67" fill="#4682b4"/><rect x="1093" y="184" width="1" height="46" fill="#4682b4"/><rect x="1088" y="199" width="11" height="23" fill="#4682b4"/><rect x="1109" y="184" width="1" height="46" fill="#4682b4"/><rect x="1104" y="199" width="11" height="9" fill="#4682b4"/><rect x="1125" y="192" width="1" height="89" fill="#ff0000"/><rect x="1120" y="207" width="11" height="52" fill="#ff0000"/><rect x="1141" y="258" width="1" height="30" fill="#ff0000"/><rect x="1136" y="265" width="11" height="9" fill="#ff0000"/><rect x="1157" y="229" width="1" height="59" fill="#4682b4"/><rect x="1152" y="236" width="11" height="45" fill="#4682b4"/><rect x="1173" y="199" width="1" height="45" fill="#4682b4"/><rect x="1168" y="207" width="11" height="37" fill="#4682b4"/><rect x="1189" y="199" width="1" height="31" fill="#ff0000"/><rect x="1184" y="199" width="11" height="23" fill="#ff0000"/><rect x="1205" y="192" width="1" height="38" fill="#4682b4"/><rect x="1200" y="192" width="11" height="23" fill="#4682b4"/><rect x="1221" y="155" width="1" height="45" fill="#4682b4"/><rect x="1216" y="184" width="11" height="16" fill="#4682b4"/><rect x="1237" y="170" width="1" height="45" fill="#4682b4"/><rect x="1232" y="170" width="11" height="8" fill="#4682b4"/><rect x="1253" y="162" width="1" height="46" fill="#ff0000"/><rect x="1248" y="177" width="11" height="31" fill="#ff0000"/><rect x="1269" y="199" width="1" height="45" fill="#ff0000"/><rect x="1264" y="214" width="11" height="30" fill="#ff0000"/><rect x="1285" y="199" width="1" height="53" fill="#4682b4"/><rect x="1280" y="207" width="11" height="45" fill="#4682b4"/><rect x="1301" y="199" width="1" height="82" fill="#ff0000"/><rect x="1296" y="199" width="11" height="82" fill="#ff0000"/><rect x="1317" y="265" width="1" height="38" fill="#4682b4"/><rect x="1312" y="265" width="11" height="9" fill="#4682b4"/></g><line x1="581.5" y1="379" x2="581.5" y2="641" stroke="#8c8c8c" stroke-width="1" stroke-dasharray="3 3"/><line x1="5" y1="387.5" x2="1324" y2="387.5" stroke="#606060" stroke-width="1" stroke-dasharray="3 3"/><line x1="5" y1="391.5" x2="1324" y2="391.5" stroke="#606060" stroke-width="1" stroke-dasharray="3 3"/><line x1="5" y1="401.5" x2="1324" y2="401.5" stroke="#606060" stroke-width="1" stroke-dasharray="3 3"/><line x1="5" y1="429.5" x2="1324" y2="429.5" stroke="#606060" stroke-width="1" stroke-dasharray="3 3"/><line x1="5" y1="434.5" x2="1324" y2="434.5" stroke="#606060" stroke-width="1" stroke-dasharray="3 3"/><line x1="5" y1="439.5" x2="1324" y2="439.5" stroke="#606060" stroke-width="1" stroke-dasharray="3 3"/><line x1="5" y1="443.5" x2="1324" y2="443.5" stroke="#606060" stroke-width="1" stroke-dasharray="3 3"/><rect x="5" y="397" width="1319" height="1" fill="#e00000"/><line x1="5" y1="396.5" x2="1324" y2="396.5" stroke="#c04040" stroke-width="1" stroke-dasharray="3 3"/><rect x="5" y="437" width="1319" height="1" fill="#008000"/><rect x="21" y="417" width="1" height="21" fill="#008000"/><rect x="20" y="422" width="3" height="16" fill="#008000"/><rect x="37" y="412" width="1" height="13" fill="#008000"/><rect x="36" y="412" width="3" height="13" fill="#008000"/><rect x="53" y="408" width="1" height="16" fill="#ff0000"/><rect x="52" y="408" width="3" height="14" fill="#ff0000"/><rect x="69" y="415" width="1" height="8" fill="#008000"/><rect x="68" y="416" width="3" height="4" fill="#008000"/><rect x="85" y="414" width="1" height="7" fill="#ff0000"/><rect x="84" y="416" width="3" height="5" fill="#ff0000"/><rect x="101" y="410" width="1" height="10" fill="#008000"/><rect x="100" y="417" width="3" height="3" fill="#008000"/><rect x="117" y="413" width="1" height="13" fill="#008000"/><rect x="116" y="415" width="3" height="5" fill="#008000"/><rect x="133" y="409" width="1" height="16" fill="#008000"/><rect x="132" y="416" width="3" height="3" fill="#008000"/><rect x="149" y="410" width="1" height="7" fill="#008000"/><rect x="148" y="410" width="3" height="6" fill="#008000"/><rect x="165" y="411" width="1" height="4" fill="#008000"/><rect x="164" y="413" width="3" height="2" fill="#008000"/><rect x="181" y="409" width="1" height="11" fill="#ff0000"/><rect x="180" y="409" width="3" height="9" fill="#ff0000"/><rect x="197" y="413" width="1" height="10" fill="#008000"/><rect x="196" y="417" width="3" height="6" fill="#008000"/><rect x="213" y="413" width="1" height="12" fill="#008000"/><rect x="212" y="418" width="3" height="7" fill="#008000"/><rect x="229" y="399" width="1" height="20" fill="#008000"/><rect x="228" y="403" width="3" height="12" fill="#008000"/><rect x="245" y="401" width="1" height="12" fill="#ff0000"/><rect x="244" y="401" width="3" height="12" fill="#ff0000"/><rect x="261" y="406" width="1" height="11" fill="#008000"/><rect x="260" y="406" width="3" height="3" fill="#008000"/><rect x="277" y="406" width="1" height="20" fill="#ff0000"/><rect x="276" y="413" width="3" height="10" fill="#ff0000"/><rect x="293" y="414" width="1" height="12" fill="#008000"/><rect x="292" y="421" width="3" height="5" fill="#008000"/><rect x="309" y="413" width="1" height="7" fill="#008000"/><rect x="308" y="413" width="3" height="7" fill="#008000"/><rect x="325" y="407" width="1" height="6" fill="#008000"/><rect x="324" y="407" width="3" height="3" fill="#008000"/><rect x="341" y="407" width="1" height="8" fill="#008000"/><rect x="340" y="407" width="3" height="8" fill="#008000"/><rect x="357" y="402" width="1" height="23" fill="#ff0000"/><rect x="356" y="413" width="3" height="8" fill="#ff0000"/><rect x="373" y="414" width="1" height="8" fill="#008000"/><rect x="372" y="414" width="3" height="3" fill="#008000"/><rect x="389" y="396" width="1" height="17" fill="#008000"/><rect x="388" y="398" width="3" height="15" fill="#008000"/><rect x="405" y="401" width="1" height="9" fill="#008000"/><rect x="404" y="407" width="3" height="3" fill="#008000"/><rect x="421" y="409" width="1" height="9" fill="#008000"/><rect x="420" y="415" width="3" height="3" fill="#008000"/><rect x="437" y="408" width="1" height="32" fill="#ff0000"/><rect x="436" y="408" width="3" height="29" fill="#ff0000"/><rect x="453" y="423" width="1" height="17" fill="#ff0000"/><rect x="452" y="423" width="3" height="11" fill="#ff0000"/><rect x="469" y="433" width="1" height="3" fill="#008000"/><rect x="468" y="433" width="3" height="3" fill="#008000"/><rect x="485" y="428" width="1" height="9" fill="#ff0000"/><rect x="484" y="428" width="3" height="6" fill="#ff0000"/><rect x="501" y="424" width="1" height="6" fill="#008000"/><rect x="500" y="424" width="3" height="6" fill="#008000"/><rect x="517" y="420" width="1" height="13" fill="#008000"/><rect x="516" y="425" width="3" height="3" fill="#008000"/><rect x="533" y="408" width="1" height="23" fill="#008000"/><rect x="532" y="422" width="3" height="9" fill="#008000"/><rect x="549" y="403" width="1" height="15" fill="#008000"/><rect x="548" y="407" width="3" height="8" fill="#008000"/><rect x="565" y="388" width="1" height="24" fill="#008000"/><rect x="564" y="391" width="3" height="19" fill="#008000"/><rect x="581" y="387" width="1" height="15" fill="#008000"/><rect x="580" y="394" width="3" height="8" fill="#008000"/><rect x="597" y="398" width="1" height="8" fill="#008000"/><rect x="596" y="398" width="3" height="8" fill="#008000"/><rect x="613" y="391" width="1" height="19" fill="#008000"/><rect x="612" y="392" width="3" height="15" fill="#008000"/><rect x="629" y="400" width="1" height="21" fill="#ff0000"/><rect x="628" y="400" width="3" height="7" fill="#ff0000"/><rect x="645" y="400" width="1" height="15" fill="#008000"/><rect x="644" y="400" width="3" height="15" fill="#008000"/><rect x="661" y="399" width="1" height="11" fill="#008000"/><rect x="660" y="400" width="3" height="4" fill="#008000"/><rect x="677" y="404" width="1" height="11" fill="#ff0000"/><rect x="676" y="404" width="3" height="11" fill="#ff0000"/><rect x="693" y="411" width="1" height="9" fill="#ff0000"/><rect x="692" y="411" width="3" height="9" fill="#ff0000"/><rect x="709" y="414" width="1" height="7" fill="#008000"/><rect x="708" y="414" width="3" height="7" fill="#008000"/><rect x="725" y="413" width="1" height="9" fill="#ff0000"/><rect x="724" y="413" width="3" height="9" fill="#ff0000"/><rect x="741" y="408" width="1" height="10" fill="#008000"/><rect x="740" y="416" width="3" height="2" fill="#008000"/><rect x="757" y="410" width="1" height="8" fill="#008000"/><rect x="756" y="411" width="3" height="5" fill="#008000"/><rect x="773" y="403" width="1" height="17" fill="#008000"/><rect x="772" y="405" width="3" height="13" fill="#008000"/><rect x="789" y="406" width="1" height="12" fill="#ff0000"/><rect x="788" y="406" width="3" height="12" fill="#ff0000"/><rect x="805" y="413" width="1" height="18" fill="#ff0000"/><rect x="804" y="413" width="3" height="10" fill="#ff0000"/><rect x="821" y="413" width="1" height="11" fill="#008000"/><rect x="820" y="413" width="3" height="11" fill="#008000"/><rect x="837" y="408" width="1" height="7" fill="#008000"/><rect x="836" y="412" width="3" height="3" fill="#008000"/><rect x="853" y="409" width="1" height="11" fill="#008000"/><rect x="852" y="411" width="3" height="3" fill="#008000"/><rect x="869" y="409" width="1" height="9" fill="#ff0000"/><rect x="868" y="413" width="3" height="5" fill="#ff0000"/><rect x="885" y="412" width="1" height="11" fill="#ff0000"/><rect x="884" y="413" width="3" height="8" fill="#ff0000"/><rect x="901" y="414" width="1" height="12" fill="#008000"/><rect x="900" y="416" width="3" height="8" fill="#008000"/><rect x="917" y="415" width="1" height="13" fill="#ff0000"/><rect x="916" y="415" width="3" height="13" fill="#ff0000"/><rect x="933" y="414" width="1" height="10" fill="#008000"/><rect x="932" y="419" width="3" height="5" fill="#008000"/><rect x="949" y="416" width="1" height="14" fill="#ff0000"/><rect x="948" y="416" width="3" height="14" fill="#ff0000"/><rect x="965" y="423" width="1" height="11" fill="#ff0000"/><rect x="964" y="423" width="3" height="11" fill="#ff0000"/><rect x="981" y="421" width="1" height="11" fill="#008000"/><rect x="980" y="422" width="3" height="10" fill="#008000"/><rect x="997" y="416" width="1" height="18" fill="#008000"/><rect x="996" y="417" width="3" height="5" fill="#008000"/><rect x="1013" y="408" width="1" height="10" fill="#008000"/><rect x="1012" y="412" width="3" height="3" fill="#008000"/><rect x="1029" y="399" width="1" height="17" fill="#008000"/><rect x="1028" y="401" width="3" height="15" fill="#008000"/><rect x="1045" y="401" width="1" height="14" fill="#ff0000"/><rect x="1044" y="406" width="3" height="9" fill="#ff0000"/><rect x="1061" y="412" width="1" height="9" fill="#ff0000"/><rect x="1060" y="412" width="3" height="7" fill="#ff0000"/><rect x="1077" y="406" width="1" height="18" fill="#008000"/><rect x="1076" y="406" width="3" height="16" fill="#008000"/><rect x="1093" y="401" width="1" height="9" fill="#008000"/><rect x="1092" y="403" width="3" height="7" fill="#008000"/><rect x="1109" y="401" width="1" height="11" fill="#008000"/><rect x="1108" y="404" width="3" height="4" fill="#008000"/><rect x="1125" y="405" width="1" height="17" fill="#ff0000"/><rect x="1124" y="406" width="3" height="14" fill="#ff0000"/><rect x="1141" y="419" width="1" height="5" fill="#ff0000"/><rect x="1140" y="419" width="3" height="4" fill="#ff0000"/><rect x="1157" y="414" width="1" height="12" fill="#008000"/><rect x="1156" y="414" width="3" height="12" fill="#008000"/><rect x="1173" y="406" width="1" height="12" fill="#008000"/><rect x="1172" y="406" width="3" height="12" fill="#008000"/><rect x="1189" y="404" width="1" height="7" fill="#ff0000"/><rect x="1188" y="404" width="3" height="7" fill="#ff0000"/><rect x="1205" y="402" width="1" height="11" fill="#008000"/><rect x="1204" y="402" width="3" height="8" fill="#008000"/><rect x="1221" y="398" width="1" height="13" fill="#008000"/><rect x="1220" y="405" width="3" height="6" fill="#008000"/><rect x="1237" y="405" width="1" height="13" fill="#008000"/><rect x="1236" y="405" width="3" height="3" fill="#008000"/><rect x="1253" y="405" width="1" height="15" fill="#ff0000"/><rect x="1252" y="409" width="3" height="11" fill="#ff0000"/><rect x="1269" y="416" width="1" height="14" fill="#ff0000"/><rect x="1268" y="419" width="3" height="11" fill="#ff0000"/><rect x="1285" y="416" width="1" height="14" fill="#008000"/><rect x="1284" y="416" width="3" height="14" fill="#008000"/><rect x="1301" y="411" width="1" height="20" fill="#ff0000"/><rect x="1300" y="411" width="3" height="20" fill="#ff0000"/><rect x="1317" y="422" width="1" height="9" fill="#008000"/><rect x="1316" y="422" width="3" height="4" fill="#008000"/><rect x="5" y="507" width="1" height="3" fill="#000"/><rect x="5" y="510" width="1" height="7" fill="#7d9cc6"/><rect x="16" y="509" width="11" height="8" fill="#12a568"/><rect x="16" y="515" width="11" height="2" fill="#4d6b50"/><rect x="20" y="507" width="2" height="3" fill="#000"/><rect x="20" y="510" width="2" height="1" fill="#5a5a5a"/><rect x="36" y="513" width="2" height="1" fill="#000"/><rect x="36" y="514" width="2" height="3" fill="#7d9cc6"/><rect x="48" y="502" width="11" height="15" fill="#d90b4e"/><rect x="48" y="515" width="11" height="2" fill="#7d4a4a"/><rect x="52" y="497" width="2" height="6" fill="#000"/><rect x="52" y="503" width="2" height="1" fill="#5a5a5a"/><rect x="68" y="505" width="2" height="3" fill="#000"/><rect x="68" y="508" width="2" height="9" fill="#7d9cc6"/><rect x="84" y="514" width="2" height="2" fill="#000"/><rect x="84" y="516" width="2" height="1" fill="#7d9cc6"/><rect x="100" y="513" width="2" height="1" fill="#000"/><rect x="100" y="514" width="2" height="3" fill="#7d9cc6"/><rect x="116" y="507" width="2" height="3" fill="#000"/><rect x="116" y="510" width="2" height="7" fill="#7d9cc6"/><rect x="128" y="500" width="11" height="17" fill="#d90b4e"/><rect x="128" y="515" width="11" height="2" fill="#7d4a4a"/><rect x="132" y="494" width="2" height="7" fill="#000"/><rect x="132" y="501" width="2" height="1" fill="#5a5a5a"/><rect x="148" y="505" width="2" height="3" fill="#000"/><rect x="148" y="508" width="2" height="9" fill="#7d9cc6"/><rect x="164" y="510" width="2" height="2" fill="#000"/><rect x="164" y="512" width="2" height="5" fill="#7d9cc6"/><rect x="180" y="516" width="2" height="1" fill="#000"/><rect x="196" y="515" width="2" height="1" fill="#000"/><rect x="196" y="516" width="2" height="1" fill="#7d9cc6"/><rect x="212" y="507" width="2" height="3" fill="#000"/><rect x="212" y="510" width="2" height="7" fill="#7d9cc6"/><rect x="224" y="507" width="11" height="10" fill="#4366d4"/><rect x="224" y="515" width="11" height="2" fill="#8a9ad0"/><rect x="228" y="504" width="2" height="4" fill="#000"/><rect x="228" y="508" width="2" height="1" fill="#5a5a5a"/><rect x="244" y="508" width="2" height="2" fill="#000"/><rect x="244" y="510" width="2" height="7" fill="#7d9cc6"/><rect x="260" y="511" width="2" height="2" fill="#000"/><rect x="260" y="513" width="2" height="4" fill="#7d9cc6"/><rect x="276" y="511" width="2" height="2" fill="#000"/><rect x="276" y="513" width="2" height="4" fill="#7d9cc6"/><rect x="292" y="511" width="2" height="2" fill="#000"/><rect x="292" y="513" width="2" height="4" fill="#7d9cc6"/><rect x="308" y="509" width="2" height="3" fill="#000"/><rect x="308" y="512" width="2" height="5" fill="#7d9cc6"/><rect x="324" y="510" width="2" height="2" fill="#000"/><rect x="324" y="512" width="2" height="5" fill="#7d9cc6"/><rect x="340" y="515" width="2" height="1" fill="#000"/><rect x="340" y="516" width="2" height="1" fill="#7d9cc6"/><rect x="356" y="510" width="2" height="2" fill="#000"/><rect x="356" y="512" width="2" height="5" fill="#7d9cc6"/><rect x="372" y="514" width="2" height="2" fill="#000"/><rect x="372" y="516" width="2" height="1" fill="#7d9cc6"/><rect x="388" y="515" width="2" height="1" fill="#000"/><rect x="388" y="516" width="2" height="1" fill="#7d9cc6"/><rect x="404" y="514" width="2" height="2" fill="#000"/><rect x="404" y="516" width="2" height="1" fill="#7d9cc6"/><rect x="420" y="516" width="2" height="1" fill="#000"/><rect x="432" y="506" width="11" height="11" fill="#d90b4e"/><rect x="432" y="515" width="11" height="2" fill="#7d4a4a"/><rect x="436" y="502" width="2" height="5" fill="#000"/><rect x="436" y="507" width="2" height="1" fill="#5a5a5a"/><rect x="452" y="513" width="2" height="1" fill="#000"/><rect x="452" y="514" width="2" height="3" fill="#7d9cc6"/><rect x="468" y="516" width="2" height="1" fill="#000"/><rect x="484" y="513" width="2" height="1" fill="#000"/><rect x="484" y="514" width="2" height="3" fill="#7d9cc6"/><rect x="500" y="513" width="2" height="1" fill="#000"/><rect x="500" y="514" width="2" height="3" fill="#7d9cc6"/><rect x="516" y="512" width="2" height="2" fill="#000"/><rect x="516" y="514" width="2" height="3" fill="#7d9cc6"/><rect x="528" y="508" width="11" height="9" fill="#12a568"/><rect x="528" y="515" width="11" height="2" fill="#4d6b50"/><rect x="532" y="505" width="2" height="4" fill="#000"/><rect x="532" y="509" width="2" height="1" fill="#5a5a5a"/><rect x="544" y="506" width="11" height="11" fill="#12a568"/><rect x="544" y="515" width="11" height="2" fill="#4d6b50"/><rect x="548" y="502" width="2" height="5" fill="#000"/><rect x="548" y="507" width="2" height="1" fill="#5a5a5a"/><rect x="560" y="508" width="11" height="9" fill="#4366d4"/><rect x="560" y="515" width="11" height="2" fill="#8a9ad0"/><rect x="564" y="505" width="2" height="4" fill="#000"/><rect x="564" y="509" width="2" height="1" fill="#5a5a5a"/><rect x="576" y="501" width="11" height="16" fill="#12a568"/><rect x="576" y="515" width="11" height="2" fill="#4d6b50"/><rect x="580" y="496" width="2" height="6" fill="#000"/><rect x="580" y="502" width="2" height="1" fill="#5a5a5a"/><rect x="592" y="503" width="11" height="14" fill="#12a568"/><rect x="592" y="515" width="11" height="2" fill="#4d6b50"/><rect x="596" y="498" width="2" height="6" fill="#000"/><rect x="596" y="504" width="2" height="1" fill="#5a5a5a"/><rect x="608" y="489" width="11" height="28" fill="#12a568"/><rect x="608" y="515" width="11" height="2" fill="#4d6b50"/><rect x="612" y="480" width="2" height="10" fill="#000"/><rect x="612" y="490" width="2" height="1" fill="#5a5a5a"/><rect x="624" y="472" width="11" height="45" fill="#d90b4e"/><rect x="624" y="515" width="11" height="2" fill="#7d4a4a"/><rect x="628" y="457" width="2" height="16" fill="#000"/><rect x="628" y="473" width="2" height="1" fill="#5a5a5a"/><rect x="640" y="477" width="11" height="40" fill="#12a568"/><rect x="640" y="515" width="11" height="2" fill="#4d6b50"/><rect x="644" y="464" width="2" height="14" fill="#000"/><rect x="644" y="478" width="2" height="1" fill="#5a5a5a"/><rect x="656" y="486" width="11" height="31" fill="#4366d4"/><rect x="656" y="515" width="11" height="2" fill="#8a9ad0"/><rect x="660" y="476" width="2" height="11" fill="#000"/><rect x="660" y="487" width="2" height="1" fill="#5a5a5a"/><rect x="676" y="488" width="2" height="8" fill="#000"/><rect x="676" y="496" width="2" height="21" fill="#7d9cc6"/><rect x="692" y="494" width="2" height="6" fill="#000"/><rect x="692" y="500" width="2" height="17" fill="#7d9cc6"/><rect x="708" y="499" width="2" height="5" fill="#000"/><rect x="708" y="504" width="2" height="13" fill="#7d9cc6"/><rect x="724" y="487" width="2" height="8" fill="#000"/><rect x="724" y="495" width="2" height="22" fill="#7d9cc6"/><rect x="740" y="492" width="2" height="6" fill="#000"/><rect x="740" y="498" width="2" height="19" fill="#7d9cc6"/><rect x="756" y="501" width="2" height="4" fill="#000"/><rect x="756" y="505" width="2" height="12" fill="#7d9cc6"/><rect x="772" y="492" width="2" height="6" fill="#000"/><rect x="772" y="498" width="2" height="19" fill="#7d9cc6"/><rect x="788" y="495" width="2" height="6" fill="#000"/><rect x="788" y="501" width="2" height="16" fill="#7d9cc6"/><rect x="804" y="488" width="2" height="7" fill="#000"/><rect x="804" y="495" width="2" height="22" fill="#7d9cc6"/><rect x="820" y="499" width="2" height="4" fill="#000"/><rect x="820" y="503" width="2" height="14" fill="#7d9cc6"/><rect x="836" y="497" width="2" height="5" fill="#000"/><rect x="836" y="502" width="2" height="15" fill="#7d9cc6"/><rect x="852" y="495" width="2" height="6" fill="#000"/><rect x="852" y="501" width="2" height="16" fill="#7d9cc6"/><rect x="868" y="493" width="2" height="6" fill="#000"/><rect x="868" y="499" width="2" height="18" fill="#7d9cc6"/><rect x="884" y="488" width="2" height="7" fill="#000"/><rect x="884" y="495" width="2" height="22" fill="#7d9cc6"/><rect x="900" y="499" width="2" height="5" fill="#000"/><rect x="900" y="504" width="2" height="13" fill="#7d9cc6"/><rect x="916" y="504" width="2" height="3" fill="#000"/><rect x="916" y="507" width="2" height="10" fill="#7d9cc6"/><rect x="932" y="507" width="2" height="3" fill="#000"/><rect x="932" y="510" width="2" height="7" fill="#7d9cc6"/><rect x="948" y="504" width="2" height="4" fill="#000"/><rect x="948" y="508" width="2" height="9" fill="#7d9cc6"/><rect x="964" y="498" width="2" height="5" fill="#000"/><rect x="964" y="503" width="2" height="14" fill="#7d9cc6"/><rect x="980" y="494" width="2" height="6" fill="#000"/><rect x="980" y="500" width="2" height="17" fill="#7d9cc6"/><rect x="992" y="498" width="11" height="19" fill="#12a568"/><rect x="992" y="515" width="11" height="2" fill="#4d6b50"/><rect x="996" y="491" width="2" height="8" fill="#000"/><rect x="996" y="499" width="2" height="1" fill="#5a5a5a"/><rect x="1012" y="496" width="2" height="6" fill="#000"/><rect x="1012" y="502" width="2" height="15" fill="#7d9cc6"/><rect x="1028" y="492" width="2" height="6" fill="#000"/><rect x="1028" y="498" width="2" height="19" fill="#7d9cc6"/><rect x="1044" y="496" width="2" height="4" fill="#000"/><rect x="1044" y="500" width="2" height="17" fill="#7d9cc6"/><rect x="1056" y="492" width="11" height="25" fill="#9c27e8"/><rect x="1056" y="515" width="11" height="2" fill="#b890d8"/><rect x="1060" y="483" width="2" height="10" fill="#000"/><rect x="1060" y="493" width="2" height="1" fill="#5a5a5a"/><rect x="1072" y="480" width="11" height="37" fill="#12a568"/><rect x="1072" y="515" width="11" height="2" fill="#4d6b50"/><rect x="1076" y="467" width="2" height="14" fill="#000"/><rect x="1076" y="481" width="2" height="1" fill="#5a5a5a"/><rect x="1088" y="484" width="11" height="33" fill="#4366d4"/><rect x="1088" y="515" width="11" height="2" fill="#8a9ad0"/><rect x="1092" y="473" width="2" height="12" fill="#000"/><rect x="1092" y="485" width="2" height="1" fill="#5a5a5a"/><rect x="1108" y="484" width="2" height="9" fill="#000"/><rect x="1108" y="493" width="2" height="24" fill="#7d9cc6"/><rect x="1124" y="480" width="2" height="9" fill="#000"/><rect x="1124" y="489" width="2" height="28" fill="#7d9cc6"/><rect x="1140" y="486" width="2" height="8" fill="#000"/><rect x="1140" y="494" width="2" height="23" fill="#7d9cc6"/><rect x="1156" y="479" width="2" height="10" fill="#000"/><rect x="1156" y="489" width="2" height="28" fill="#7d9cc6"/><rect x="1172" y="499" width="2" height="4" fill="#000"/><rect x="1172" y="503" width="2" height="14" fill="#7d9cc6"/><rect x="1188" y="500" width="2" height="4" fill="#000"/><rect x="1188" y="504" width="2" height="13" fill="#7d9cc6"/><rect x="1204" y="484" width="2" height="8" fill="#000"/><rect x="1204" y="492" width="2" height="25" fill="#7d9cc6"/><rect x="1220" y="498" width="2" height="5" fill="#000"/><rect x="1220" y="503" width="2" height="14" fill="#7d9cc6"/><rect x="1236" y="494" width="2" height="6" fill="#000"/><rect x="1236" y="500" width="2" height="17" fill="#7d9cc6"/><rect x="1252" y="480" width="2" height="9" fill="#000"/><rect x="1252" y="489" width="2" height="28" fill="#7d9cc6"/><rect x="1268" y="503" width="2" height="4" fill="#000"/><rect x="1268" y="507" width="2" height="10" fill="#7d9cc6"/><rect x="1284" y="500" width="2" height="4" fill="#000"/><rect x="1284" y="504" width="2" height="13" fill="#7d9cc6"/><rect x="1300" y="499" width="2" height="4" fill="#000"/><rect x="1300" y="503" width="2" height="14" fill="#7d9cc6"/><rect x="1316" y="491" width="2" height="6" fill="#000"/><rect x="1316" y="497" width="2" height="20" fill="#7d9cc6"/><rect x="5" y="568" width="2" height="9" fill="#00bfff"/><rect x="20" y="567" width="3" height="10" fill="#00bfff"/><rect x="36" y="573" width="3" height="4" fill="#00bfff"/><rect x="52" y="559" width="3" height="18" fill="#00bfff"/><rect x="68" y="566" width="3" height="11" fill="#00bfff"/><rect x="84" y="574" width="3" height="3" fill="#00bfff"/><rect x="100" y="573" width="3" height="4" fill="#00bfff"/><rect x="116" y="567" width="3" height="10" fill="#00bfff"/><rect x="132" y="556" width="3" height="21" fill="#00bfff"/><rect x="148" y="566" width="3" height="11" fill="#00bfff"/><rect x="164" y="570" width="3" height="7" fill="#00bfff"/><rect x="180" y="575" width="3" height="2" fill="#00bfff"/><rect x="196" y="574" width="3" height="3" fill="#00bfff"/><rect x="212" y="568" width="3" height="9" fill="#00bfff"/><rect x="228" y="563" width="3" height="14" fill="#00bfff"/><rect x="244" y="568" width="3" height="9" fill="#00bfff"/><rect x="260" y="571" width="3" height="6" fill="#00bfff"/><rect x="276" y="571" width="3" height="6" fill="#00bfff"/><rect x="292" y="572" width="3" height="5" fill="#00bfff"/><rect x="308" y="569" width="3" height="8" fill="#00ff00"/><rect x="324" y="570" width="3" height="7" fill="#00bfff"/><rect x="340" y="574" width="3" height="3" fill="#00bfff"/><rect x="356" y="570" width="3" height="7" fill="#00bfff"/><rect x="372" y="574" width="3" height="3" fill="#00bfff"/><rect x="388" y="575" width="3" height="2" fill="#00bfff"/><rect x="404" y="574" width="3" height="3" fill="#00bfff"/><rect x="420" y="576" width="3" height="1" fill="#ffa500"/><rect x="436" y="563" width="3" height="14" fill="#00bfff"/><rect x="452" y="573" width="3" height="4" fill="#00bfff"/><rect x="468" y="576" width="3" height="1" fill="#ffa500"/><rect x="484" y="573" width="3" height="4" fill="#00bfff"/><rect x="500" y="573" width="3" height="4" fill="#00bfff"/><rect x="516" y="572" width="3" height="5" fill="#00bfff"/><rect x="532" y="564" width="3" height="13" fill="#00bfff"/><rect x="548" y="563" width="3" height="14" fill="#00bfff"/><rect x="564" y="564" width="3" height="13" fill="#00bfff"/><rect x="596" y="559" width="3" height="18" fill="#00bfff"/><rect x="644" y="529" width="3" height="48" fill="#00bfff"/><rect x="660" y="540" width="3" height="37" fill="#00bfff"/><rect x="676" y="551" width="3" height="26" fill="#00bfff"/><rect x="692" y="556" width="3" height="21" fill="#00bfff"/><rect x="708" y="560" width="3" height="17" fill="#00bfff"/><rect x="724" y="551" width="3" height="26" fill="#00bfff"/><rect x="740" y="555" width="3" height="22" fill="#00bfff"/><rect x="756" y="562" width="3" height="15" fill="#00bfff"/><rect x="772" y="555" width="3" height="22" fill="#00bfff"/><rect x="788" y="557" width="3" height="20" fill="#00bfff"/><rect x="804" y="551" width="3" height="26" fill="#00bfff"/><rect x="820" y="560" width="3" height="17" fill="#00bfff"/><rect x="836" y="558" width="3" height="19" fill="#00bfff"/><rect x="852" y="557" width="3" height="20" fill="#00bfff"/><rect x="868" y="556" width="3" height="21" fill="#00ff00"/><rect x="884" y="551" width="3" height="26" fill="#00bfff"/><rect x="900" y="562" width="3" height="15" fill="#00bfff"/><rect x="916" y="565" width="3" height="12" fill="#ffa500"/><rect x="932" y="568" width="3" height="9" fill="#ffa500"/><rect x="948" y="565" width="3" height="12" fill="#00bfff"/><rect x="964" y="560" width="3" height="17" fill="#00bfff"/><rect x="980" y="556" width="3" height="21" fill="#00bfff"/><rect x="996" y="554" width="3" height="23" fill="#00bfff"/><rect x="1012" y="558" width="3" height="19" fill="#00bfff"/><rect x="1028" y="554" width="3" height="23" fill="#00bfff"/><rect x="1044" y="558" width="3" height="19" fill="#00bfff"/><rect x="1060" y="547" width="3" height="30" fill="#00bfff"/><rect x="1092" y="538" width="3" height="39" fill="#00bfff"/><rect x="1108" y="548" width="3" height="29" fill="#00bfff"/><rect x="1124" y="544" width="3" height="33" fill="#00bfff"/><rect x="1140" y="550" width="3" height="27" fill="#00bfff"/><rect x="1156" y="543" width="3" height="34" fill="#00bfff"/><rect x="1172" y="560" width="3" height="17" fill="#00bfff"/><rect x="1188" y="560" width="3" height="17" fill="#00bfff"/><rect x="1204" y="547" width="3" height="30" fill="#00bfff"/><rect x="1220" y="559" width="3" height="18" fill="#00bfff"/><rect x="1236" y="556" width="3" height="21" fill="#00bfff"/><rect x="1252" y="544" width="3" height="33" fill="#00bfff"/><rect x="1268" y="564" width="3" height="13" fill="#ffa500"/><rect x="1284" y="560" width="3" height="17" fill="#00bfff"/><rect x="1300" y="560" width="3" height="17" fill="#00bfff"/><rect x="1316" y="553" width="3" height="24" fill="#00bfff"/><rect x="5" y="560" width="64" height="2" fill="#b81414"/><rect x="69" y="561" width="113" height="2" fill="#b81414"/><rect x="182" y="562" width="463" height="2" fill="#b81414"/><rect x="645" y="560" width="65" height="2" fill="#b81414"/><rect x="710" y="561" width="448" height="2" fill="#b81414"/><rect x="1158" y="560" width="161" height="2" fill="#b81414"/><rect x="580" y="558" width="3" height="19" fill="#ff0000"/><rect x="612" y="544" width="3" height="33" fill="#ff0000"/><rect x="628" y="524" width="3" height="53" fill="#ff0000"/><rect x="1076" y="532" width="3" height="45" fill="#ff0000"/><g clip-path="url(#c4)"><rect x="5" y="611" width="1319" height="1" fill="#787878"/><rect x="5" y="612" width="1319" height="1" fill="#ffffff"/><rect x="5" y="613" width="1319" height="1" fill="#787878"/><rect x="5" y="611" width="17" height="1" fill="#8a9c8a"/><rect x="5" y="612" width="17" height="2" fill="#1d5c1d"/><rect x="21" y="611" width="17" height="1" fill="#8a9c8a"/><rect x="21" y="612" width="17" height="2" fill="#1d5c1d"/><rect x="37" y="611" width="17" height="1" fill="#8a9c8a"/><rect x="37" y="612" width="17" height="2" fill="#1d5c1d"/><rect x="53" y="611" width="17" height="1" fill="#8a9c8a"/><rect x="53" y="612" width="17" height="2" fill="#1d5c1d"/><rect x="101" y="611" width="17" height="1" fill="#8a9c8a"/><rect x="101" y="612" width="17" height="2" fill="#1d5c1d"/><rect x="149" y="611" width="17" height="1" fill="#8a9c8a"/><rect x="149" y="612" width="17" height="2" fill="#1d5c1d"/><rect x="165" y="611" width="17" height="1" fill="#8a9c8a"/><rect x="165" y="612" width="17" height="2" fill="#1d5c1d"/><rect x="181" y="611" width="17" height="1" fill="#8a9c8a"/><rect x="181" y="612" width="17" height="2" fill="#1d5c1d"/><rect x="197" y="611" width="17" height="1" fill="#8a9c8a"/><rect x="197" y="612" width="17" height="2" fill="#1d5c1d"/><rect x="213" y="611" width="17" height="1" fill="#8a9c8a"/><rect x="213" y="612" width="17" height="2" fill="#1d5c1d"/><rect x="229" y="611" width="17" height="1" fill="#8a9c8a"/><rect x="229" y="612" width="17" height="2" fill="#1d5c1d"/><rect x="245" y="611" width="17" height="1" fill="#8a9c8a"/><rect x="245" y="612" width="17" height="2" fill="#1d5c1d"/><rect x="261" y="611" width="17" height="1" fill="#8a9c8a"/><rect x="261" y="612" width="17" height="2" fill="#1d5c1d"/><rect x="277" y="611" width="17" height="1" fill="#8a9c8a"/><rect x="277" y="612" width="17" height="2" fill="#1d5c1d"/><rect x="293" y="611" width="17" height="1" fill="#8a9c8a"/><rect x="293" y="612" width="17" height="2" fill="#1d5c1d"/><rect x="309" y="611" width="17" height="1" fill="#8a9c8a"/><rect x="309" y="612" width="17" height="2" fill="#1d5c1d"/><rect x="325" y="611" width="17" height="1" fill="#8a9c8a"/><rect x="325" y="612" width="17" height="2" fill="#1d5c1d"/><rect x="341" y="611" width="17" height="1" fill="#8a9c8a"/><rect x="341" y="612" width="17" height="2" fill="#1d5c1d"/><rect x="357" y="611" width="17" height="1" fill="#8a9c8a"/><rect x="357" y="612" width="17" height="2" fill="#1d5c1d"/><rect x="693" y="611" width="17" height="1" fill="#8a9c8a"/><rect x="693" y="612" width="17" height="2" fill="#1d5c1d"/><rect x="709" y="611" width="17" height="1" fill="#8a9c8a"/><rect x="709" y="612" width="17" height="2" fill="#1d5c1d"/><rect x="725" y="611" width="17" height="1" fill="#8a9c8a"/><rect x="725" y="612" width="17" height="2" fill="#1d5c1d"/><rect x="741" y="611" width="17" height="1" fill="#8a9c8a"/><rect x="741" y="612" width="17" height="2" fill="#1d5c1d"/><rect x="757" y="611" width="17" height="1" fill="#8a9c8a"/><rect x="757" y="612" width="17" height="2" fill="#1d5c1d"/><rect x="773" y="611" width="17" height="1" fill="#8a9c8a"/><rect x="773" y="612" width="17" height="2" fill="#1d5c1d"/><rect x="789" y="611" width="17" height="1" fill="#8a9c8a"/><rect x="789" y="612" width="17" height="2" fill="#1d5c1d"/><rect x="805" y="611" width="17" height="1" fill="#8a9c8a"/><rect x="805" y="612" width="17" height="2" fill="#1d5c1d"/><rect x="821" y="611" width="17" height="1" fill="#8a9c8a"/><rect x="821" y="612" width="17" height="2" fill="#1d5c1d"/><rect x="837" y="611" width="17" height="1" fill="#8a9c8a"/><rect x="837" y="612" width="17" height="2" fill="#1d5c1d"/><rect x="853" y="611" width="17" height="1" fill="#8a9c8a"/><rect x="853" y="612" width="17" height="2" fill="#1d5c1d"/><rect x="869" y="611" width="17" height="1" fill="#8a9c8a"/><rect x="869" y="612" width="17" height="2" fill="#1d5c1d"/><rect x="885" y="611" width="17" height="1" fill="#8a9c8a"/><rect x="885" y="612" width="17" height="2" fill="#1d5c1d"/><rect x="901" y="611" width="17" height="1" fill="#8a9c8a"/><rect x="901" y="612" width="17" height="2" fill="#1d5c1d"/><rect x="917" y="611" width="17" height="1" fill="#8a9c8a"/><rect x="917" y="612" width="17" height="2" fill="#1d5c1d"/><rect x="1013" y="611" width="17" height="1" fill="#8a9c8a"/><rect x="1013" y="612" width="17" height="2" fill="#1d5c1d"/><rect x="1029" y="611" width="17" height="1" fill="#8a9c8a"/><rect x="1029" y="612" width="17" height="2" fill="#1d5c1d"/><rect x="1045" y="611" width="17" height="1" fill="#8a9c8a"/><rect x="1045" y="612" width="17" height="2" fill="#1d5c1d"/><rect x="1061" y="611" width="17" height="1" fill="#8a9c8a"/><rect x="1061" y="612" width="17" height="2" fill="#1d5c1d"/><rect x="1125" y="611" width="17" height="1" fill="#8a9c8a"/><rect x="1125" y="612" width="17" height="2" fill="#1d5c1d"/><rect x="1141" y="611" width="17" height="1" fill="#8a9c8a"/><rect x="1141" y="612" width="17" height="2" fill="#1d5c1d"/><rect x="1253" y="611" width="17" height="1" fill="#8a9c8a"/><rect x="1253" y="612" width="17" height="2" fill="#1d5c1d"/><rect x="1269" y="611" width="17" height="1" fill="#8a9c8a"/><rect x="1269" y="612" width="17" height="2" fill="#1d5c1d"/><polyline points="5.5,615.5 21.5,640.5 37.5,613.7 53.5,618.9 69.5,614.5 85.5,634.8 101.5,613.7 117.5,613.0 133.5,613.0 149.5,613.0 165.5,613.0 181.5,613.0 197.5,613.0 213.5,612.5 229.5,583.5 245.5,612.0 261.5,608.9 277.5,620.1 293.5,615.9 309.5,612.5 325.5,606.0 341.5,610.5 357.5,612.5 373.5,613.0 389.5,583.5 405.5,608.9 421.5,613.0 437.5,640.5 453.5,638.9 469.5,631.5 485.5,640.1 501.5,618.9 517.5,617.5 533.5,613.9 549.5,612.5 565.5,583.5 581.5,583.5 597.5,598.5 613.5,583.5 629.5,611.5 645.5,583.5 661.5,597.2 677.5,611.5 693.5,613.0 709.5,613.0 725.5,613.0 741.5,613.0 757.5,613.0 773.5,613.0 789.5,613.0 805.5,640.5 821.5,613.0 837.5,611.0 853.5,613.0 869.5,613.0 885.5,613.0 901.5,613.0 917.5,640.5 933.5,613.9 949.5,640.5 965.5,640.5 981.5,615.5 997.5,612.2 1013.5,613.0 1029.5,608.9 1045.5,613.0 1061.5,613.0 1077.5,608.0 1093.5,593.0 1109.5,605.5 1125.5,613.0 1141.5,617.7 1157.5,613.0 1173.5,608.9 1189.5,613.0 1205.5,612.0 1221.5,610.5 1237.5,598.9 1253.5,613.0 1269.5,640.5 1285.5,613.0 1301.5,640.5 1317.5,615.5" fill="none" stroke="#ff0000" stroke-width="1"/><polyline points="5.5,614.7 21.5,616.9 37.5,613.7 53.5,615.2 69.5,613.7 85.5,616.9 101.5,613.9 117.5,613.5 133.5,616.7 149.5,613.7 165.5,613.0 181.5,613.0 197.5,613.0 213.5,613.0 229.5,613.0 245.5,613.0 261.5,613.0 277.5,613.0 293.5,613.0 309.5,613.0 325.5,605.5 341.5,607.2 357.5,612.2 373.5,613.0 389.5,583.5 405.5,608.9 421.5,613.0 437.5,640.5 453.5,640.5 469.5,640.5 485.5,640.1 501.5,626.9 517.5,626.9 533.5,620.2 549.5,613.9 565.5,608.0 581.5,584.5 597.5,583.5 613.5,583.5 629.5,605.5 645.5,583.5 661.5,585.5 677.5,607.2 693.5,613.0 709.5,613.0 725.5,613.0 741.5,613.0 757.5,613.0 773.5,613.0 789.5,613.0 805.5,613.0 821.5,613.0 837.5,613.0 853.5,613.0 869.5,613.0 885.5,613.0 901.5,613.0 917.5,640.5 933.5,613.9 949.5,640.5 965.5,640.5 981.5,618.1 997.5,615.5 1013.5,613.8 1029.5,613.0 1045.5,613.0 1061.5,613.0 1077.5,612.5 1093.5,602.7 1109.5,605.2 1125.5,613.0 1141.5,613.0 1157.5,613.0 1173.5,613.0 1189.5,613.0 1205.5,605.9 1221.5,604.4 1237.5,599.7 1253.5,613.0 1269.5,613.0 1285.5,613.0 1301.5,640.5 1317.5,621.4" fill="none" stroke="#ffa500" stroke-width="1"/><polyline points="389.5,583.5 405.5,608.9" fill="none" stroke="#ff0000" stroke-width="1"/><polyline points="917.5,640.5 933.5,613.9 949.5,640.5" fill="none" stroke="#ff0000" stroke-width="1"/><polyline points="965.5,640.5 981.5,615.5" fill="none" stroke="#ff0000" stroke-width="1"/><polyline points="5.5,613.0 21.5,613.0 37.5,613.0 53.5,613.0 69.5,613.0 85.5,618.1 101.5,613.0 117.5,613.0 133.5,613.8 149.5,613.0 165.5,613.0 181.5,613.0 197.5,613.0 213.5,613.0 229.5,613.0 245.5,613.0 261.5,613.0 277.5,613.0 293.5,613.0 309.5,613.0 325.5,613.0 341.5,613.0 357.5,613.0 373.5,613.0 389.5,606.4 405.5,609.7 421.5,613.4 437.5,613.9 453.5,628.1 469.5,640.5 485.5,640.1 501.5,637.5 517.5,640.5 533.5,633.5 549.5,615.5 565.5,612.2 581.5,610.9 597.5,599.2 613.5,583.5 629.5,598.0 645.5,583.5 661.5,583.8 677.5,606.4 693.5,613.0 709.5,613.0 725.5,613.0 741.5,613.0 757.5,613.0 773.5,613.0 789.5,613.0 805.5,613.0 821.5,613.0 837.5,613.0 853.5,613.0 869.5,613.0 885.5,613.0 901.5,613.0 917.5,613.0 933.5,613.0 949.5,613.5 965.5,618.9 981.5,616.5 997.5,614.7 1013.5,613.0 1029.5,613.0 1045.5,613.0 1061.5,613.0 1077.5,613.0 1093.5,612.7 1109.5,611.0 1125.5,613.0 1141.5,613.0 1157.5,613.0 1173.5,612.6 1189.5,613.0 1205.5,610.2 1221.5,608.0 1237.5,603.9 1253.5,613.0 1269.5,613.0 1285.5,613.0 1301.5,614.7 1317.5,613.5" fill="none" stroke="#1a6a1a" stroke-width="1"/><rect x="105" y="611" width="4" height="2" fill="#e03030"/><rect x="120" y="611" width="4" height="2" fill="#e07820"/><rect x="174" y="611" width="13" height="2" fill="#7a5a3a"/><rect x="189" y="611" width="15" height="2" fill="#8a9a50"/><rect x="677" y="611" width="10" height="2" fill="#a04030"/><rect x="990" y="611" width="14" height="2" fill="#d03030"/><rect x="1008" y="611" width="12" height="2" fill="#8a9a50"/><rect x="1148" y="611" width="5" height="2" fill="#7a5a3a"/></g><polygon points="5,636 5,641 10,641" fill="#a0a0a0"/><rect x="4" y="80" width="1321" height="1" fill="#000"/><rect x="4" y="376" width="1321" height="1" fill="#000"/><rect x="4" y="80" width="1" height="297" fill="#000"/><rect x="1324" y="80" width="1" height="297" fill="#000"/><rect x="4" y="378" width="1321" height="1" fill="#000"/><rect x="4" y="451" width="1321" height="1" fill="#000"/><rect x="4" y="378" width="1" height="74" fill="#000"/><rect x="1324" y="378" width="1" height="74" fill="#000"/><rect x="4" y="453" width="1321" height="1" fill="#000"/><rect x="4" y="518" width="1321" height="1" fill="#000"/><rect x="4" y="453" width="1" height="66" fill="#000"/><rect x="1324" y="453" width="1" height="66" fill="#000"/><rect x="4" y="520" width="1321" height="1" fill="#000"/><rect x="4" y="580" width="1321" height="1" fill="#000"/><rect x="4" y="520" width="1" height="61" fill="#000"/><rect x="1324" y="520" width="1" height="61" fill="#000"/><rect x="4" y="582" width="1321" height="1" fill="#000"/><rect x="4" y="641" width="1321" height="1" fill="#000"/><rect x="4" y="582" width="1" height="60" fill="#000"/><rect x="1324" y="582" width="1" height="60" fill="#000"/><rect x="2" y="377" width="1323" height="1" fill="#fff"/><rect x="2" y="452" width="1323" height="1" fill="#fff"/><rect x="2" y="519" width="1323" height="1" fill="#fff"/><rect x="2" y="581" width="1323" height="1" fill="#fff"/><rect x="1325" y="82" width="2" height="1" fill="#000"/><rect x="1325" y="118" width="2" height="1" fill="#000"/><rect x="1325" y="155" width="2" height="1" fill="#000"/><rect x="1325" y="192" width="2" height="1" fill="#000"/><rect x="1325" y="229" width="2" height="1" fill="#000"/><rect x="1325" y="265" width="2" height="1" fill="#000"/><rect x="1325" y="302" width="2" height="1" fill="#000"/><rect x="1325" y="339" width="2" height="1" fill="#000"/></g><text x="1330.5" y="85.8" font-size="9.5" fill="#000" textLength="27.5" lengthAdjust="spacingAndGlyphs">1.0010</text><text x="1330.5" y="121.8" font-size="9.5" fill="#000" textLength="27.5" lengthAdjust="spacingAndGlyphs">1.0005</text><text x="1330.5" y="158.8" font-size="9.5" fill="#000" textLength="27.5" lengthAdjust="spacingAndGlyphs">1.0000</text><text x="1330.5" y="195.8" font-size="9.5" fill="#000" textLength="27.5" lengthAdjust="spacingAndGlyphs">0.9995</text><text x="1330.5" y="232.8" font-size="9.5" fill="#000" textLength="27.5" lengthAdjust="spacingAndGlyphs">0.9990</text><text x="1330.5" y="268.8" font-size="9.5" fill="#000" textLength="27.5" lengthAdjust="spacingAndGlyphs">0.9985</text><text x="1330.5" y="305.8" font-size="9.5" fill="#000" textLength="27.5" lengthAdjust="spacingAndGlyphs">0.9980</text><text x="1330.5" y="342.8" font-size="9.5" fill="#000" textLength="27.5" lengthAdjust="spacingAndGlyphs">0.9975</text><polygon points="1185.5,81 1195.5,81 1190.5,86.2" fill="#b0b0b0"/><polygon points="8,87 15,87 11.5,91" fill="#000"/><text x="20.5" y="92" font-size="9.5" fill="#000" textLength="60.5" lengthAdjust="spacingAndGlyphs">USDCHF,M15</text><text x="87" y="92" font-size="9.5" fill="#000" textLength="121.5" lengthAdjust="spacingAndGlyphs">0.9968 0.9970 0.9967 0.9970</text><path d="M656.5,129.5 L659.5,133 L666,124.5" fill="none" stroke="#000" stroke-width="1.6"/><path d="M597.5,279.8 L593,285.5 L595.5,285.5 L595.5,291.5 L599.5,291.5 L599.5,285.5 L602,285.5 Z" fill="#fff" stroke="#000" stroke-width="1"/><text x="9" y="390.5" font-size="9.5" fill="#000" textLength="223" lengthAdjust="spacingAndGlyphs">CHT_Value_Chart (5,0) 2.6429 0.5000 1.2143 2.6429</text><text x="9.5" y="465.4" font-size="9.5" fill="#000" textLength="72" lengthAdjust="spacingAndGlyphs">Broker Tick PVA:</text><text x="94.6" y="465.4" font-size="9.5" fill="#000" textLength="37.4" lengthAdjust="spacingAndGlyphs">Alert On,</text><text x="139.4" y="465.4" font-size="9.5" fill="#000" textLength="25" lengthAdjust="spacingAndGlyphs">Count</text><text x="170.5" y="465.4" font-size="9.5" fill="#000" textLength="9" lengthAdjust="spacingAndGlyphs">37</text><text x="9" y="532.4" font-size="9.5" fill="#000" textLength="302.5" lengthAdjust="spacingAndGlyphs">Better Volume 1.4 0.0000 0.0000 37.0000 0.0000 0.0000 0.0000 72.0000</text><text x="9" y="594.4" font-size="9.5" fill="#000" textLength="138" lengthAdjust="spacingAndGlyphs">Trend direction &amp; force (3) 0.0227</text><text x="153" y="594.4" font-size="9.5" fill="#000" textLength="138" lengthAdjust="spacingAndGlyphs">Trend direction &amp; force (5) 0.0073</text><text x="297" y="594.4" font-size="9.5" fill="#000" textLength="138" lengthAdjust="spacingAndGlyphs">Trend direction &amp; force (9) 0.0110</text><text x="1328.5" y="388.5" font-size="9.5" fill="#000" textLength="10" lengthAdjust="spacingAndGlyphs">15</text><text x="1328.5" y="430" font-size="9.5" fill="#000" textLength="8" lengthAdjust="spacingAndGlyphs">-6</text><text x="1327.5" y="448" font-size="9.5" fill="#000" textLength="13" lengthAdjust="spacingAndGlyphs">-15</text><text x="1328.5" y="419" font-size="9.5" fill="#000" textLength="17.5" lengthAdjust="spacingAndGlyphs">0.00</text><rect x="1326" y="391" width="36" height="11" fill="#ff0000"/><text x="1330.5" y="400" font-size="9.5" fill="#fff" textLength="27.5" lengthAdjust="spacingAndGlyphs">7.8000</text><rect x="1326" y="431" width="38" height="11" fill="#008000"/><text x="1327.5" y="440" font-size="9.5" fill="#fff" textLength="31" lengthAdjust="spacingAndGlyphs">-9.1000</text><text x="1328.5" y="464" font-size="9.5" fill="#000" textLength="15" lengthAdjust="spacingAndGlyphs">249</text><text x="1328.5" y="514.5" font-size="9.5" fill="#000" textLength="5" lengthAdjust="spacingAndGlyphs">0</text><text x="1328.5" y="531" font-size="9.5" fill="#000" textLength="22.5" lengthAdjust="spacingAndGlyphs">186.9</text><clipPath id="c3"><rect x="1325" y="520" width="41" height="60"/></clipPath><g clip-path="url(#c3)"><text x="1328.5" y="582" font-size="9.5" fill="#000" textLength="17.5" lengthAdjust="spacingAndGlyphs">0.00</text></g><text x="1330" y="575.5" font-size="9.5" fill="#000" textLength="15" lengthAdjust="spacingAndGlyphs">-8.8</text><text x="1328.5" y="593.5" font-size="9.5" fill="#000" textLength="4" lengthAdjust="spacingAndGlyphs">1</text><text x="1328.5" y="616" font-size="9.5" fill="#000" textLength="17.5" lengthAdjust="spacingAndGlyphs">0.00</text><text x="1328.5" y="638" font-size="9.5" fill="#000" textLength="8" lengthAdjust="spacingAndGlyphs">-1</text><rect x="1325" y="385" width="1" height="1" fill="#000"/><rect x="1325" y="415" width="1" height="1" fill="#000"/><rect x="1325" y="427" width="1" height="1" fill="#000"/><rect x="1325" y="445" width="1" height="1" fill="#000"/><rect x="1325" y="461" width="1" height="1" fill="#000"/><rect x="1325" y="513" width="1" height="1" fill="#000"/><rect x="1325" y="528" width="1" height="1" fill="#000"/><rect x="1325" y="575" width="1" height="1" fill="#000"/><rect x="1325" y="590" width="1" height="1" fill="#000"/><rect x="1325" y="612" width="1" height="1" fill="#000"/><rect x="1325" y="635" width="1" height="1" fill="#000"/><rect x="5" y="642" width="1" height="3" fill="#000"/><text x="4.2" y="653.6" font-size="9.5" fill="#000" textLength="53.5" lengthAdjust="spacingAndGlyphs">26 Nov 2018</text><rect x="69" y="642" width="1" height="3" fill="#000"/><text x="68.2" y="653.6" font-size="9.5" fill="#000" textLength="56" lengthAdjust="spacingAndGlyphs">26 Nov 23:45</text><rect x="133" y="642" width="1" height="3" fill="#000"/><text x="132.2" y="653.6" font-size="9.5" fill="#000" textLength="56" lengthAdjust="spacingAndGlyphs">27 Nov 00:45</text><rect x="197" y="642" width="1" height="3" fill="#000"/><text x="196.2" y="653.6" font-size="9.5" fill="#000" textLength="56" lengthAdjust="spacingAndGlyphs">27 Nov 01:45</text><rect x="261" y="642" width="1" height="3" fill="#000"/><text x="260.2" y="653.6" font-size="9.5" fill="#000" textLength="56" lengthAdjust="spacingAndGlyphs">27 Nov 02:45</text><rect x="325" y="642" width="1" height="3" fill="#000"/><text x="324.2" y="653.6" font-size="9.5" fill="#000" textLength="56" lengthAdjust="spacingAndGlyphs">27 Nov 03:45</text><rect x="389" y="642" width="1" height="3" fill="#000"/><text x="388.2" y="653.6" font-size="9.5" fill="#000" textLength="56" lengthAdjust="spacingAndGlyphs">27 Nov 04:45</text><rect x="453" y="642" width="1" height="3" fill="#000"/><text x="452.2" y="653.6" font-size="9.5" fill="#000" textLength="56" lengthAdjust="spacingAndGlyphs">27 Nov 05:45</text><rect x="517" y="642" width="1" height="3" fill="#000"/><text x="516.2" y="653.6" font-size="9.5" fill="#000" textLength="56" lengthAdjust="spacingAndGlyphs">27 Nov 06:45</text><rect x="581" y="642" width="1" height="3" fill="#000"/><text x="580.2" y="653.6" font-size="9.5" fill="#000" textLength="56" lengthAdjust="spacingAndGlyphs">27 Nov 07:45</text><rect x="645" y="642" width="1" height="3" fill="#000"/><text x="644.2" y="653.6" font-size="9.5" fill="#000" textLength="56" lengthAdjust="spacingAndGlyphs">27 Nov 08:45</text><rect x="709" y="642" width="1" height="3" fill="#000"/><text x="708.2" y="653.6" font-size="9.5" fill="#000" textLength="56" lengthAdjust="spacingAndGlyphs">27 Nov 09:45</text><rect x="773" y="642" width="1" height="3" fill="#000"/><text x="772.2" y="653.6" font-size="9.5" fill="#000" textLength="56" lengthAdjust="spacingAndGlyphs">27 Nov 10:45</text><rect x="837" y="642" width="1" height="3" fill="#000"/><text x="836.2" y="653.6" font-size="9.5" fill="#000" textLength="56" lengthAdjust="spacingAndGlyphs">27 Nov 11:45</text><rect x="901" y="642" width="1" height="3" fill="#000"/><text x="900.2" y="653.6" font-size="9.5" fill="#000" textLength="56" lengthAdjust="spacingAndGlyphs">27 Nov 12:45</text><rect x="965" y="642" width="1" height="3" fill="#000"/><text x="964.2" y="653.6" font-size="9.5" fill="#000" textLength="56" lengthAdjust="spacingAndGlyphs">27 Nov 13:45</text><rect x="1029" y="642" width="1" height="3" fill="#000"/><text x="1028.2" y="653.6" font-size="9.5" fill="#000" textLength="56" lengthAdjust="spacingAndGlyphs">27 Nov 14:45</text><rect x="1093" y="642" width="1" height="3" fill="#000"/><text x="1092.2" y="653.6" font-size="9.5" fill="#000" textLength="56" lengthAdjust="spacingAndGlyphs">27 Nov 15:45</text><rect x="1157" y="642" width="1" height="3" fill="#000"/><text x="1156.2" y="653.6" font-size="9.5" fill="#000" textLength="56" lengthAdjust="spacingAndGlyphs">27 Nov 16:45</text><rect x="1221" y="642" width="1" height="3" fill="#000"/><text x="1220.2" y="653.6" font-size="9.5" fill="#000" textLength="56" lengthAdjust="spacingAndGlyphs">27 Nov 17:45</text><rect x="1285" y="642" width="1" height="3" fill="#000"/><text x="1284.2" y="653.6" font-size="9.5" fill="#000" textLength="56" lengthAdjust="spacingAndGlyphs">27 Nov 18:45</text><rect x="541" y="645" width="80" height="11" fill="#a9a9a9"/><text x="545" y="653.6" font-size="9.5" fill="#fff" textLength="72" lengthAdjust="spacingAndGlyphs">2018.11.27 07:45</text><rect x="0" y="662" width="1366" height="2" fill="#fcfcfc"/><rect x="0" y="664" width="1366" height="21" fill="#f0f0f2"/><rect x="0" y="664" width="614" height="1" fill="#3c3c3c"/><rect x="706" y="664" width="660" height="1" fill="#3c3c3c"/><rect x="0" y="683" width="1366" height="2" fill="#fafafa"/><rect x="0" y="662" width="2" height="21" fill="#a0a0a0"/><rect x="614" y="662" width="92" height="21" fill="#ffffff"/><rect x="614" y="664" width="1" height="19" fill="#000"/><rect x="705" y="664" width="1" height="19" fill="#000"/><rect x="614" y="682" width="92" height="1.5" fill="#000"/><text x="17.5" y="677.5" font-size="11.6" fill="#6e6e6e" textLength="56.8" lengthAdjust="spacingAndGlyphs">USDJPY,H1</text><text x="97.6" y="677.5" font-size="11.6" fill="#6e6e6e" textLength="56.8" lengthAdjust="spacingAndGlyphs">USDJPY,H1</text><text x="178.7" y="677.5" font-size="11.6" fill="#6e6e6e" textLength="71.3" lengthAdjust="spacingAndGlyphs">USDCAD,M30</text><text x="273.3" y="677.5" font-size="11.6" fill="#6e6e6e" textLength="56.8" lengthAdjust="spacingAndGlyphs">USDJPY,H1</text><text x="353.6" y="677.5" font-size="11.6" fill="#6e6e6e" textLength="56.8" lengthAdjust="spacingAndGlyphs">USDJPY,H1</text><text x="434.5" y="677.5" font-size="11.6" fill="#6e6e6e" textLength="71.3" lengthAdjust="spacingAndGlyphs">USDCAD,M15</text><text x="530.3" y="677.5" font-size="11.6" fill="#6e6e6e" textLength="71.5" lengthAdjust="spacingAndGlyphs">AUDUSD,M15</text><text x="624.2" y="677.5" font-size="11.6" fill="#000" textLength="70.8" lengthAdjust="spacingAndGlyphs">USDCHF,M15</text><rect x="86" y="667" width="1" height="13" fill="#555"/><rect x="166" y="667" width="1" height="13" fill="#555"/><rect x="262" y="667" width="1" height="13" fill="#555"/><rect x="342" y="667" width="1" height="13" fill="#555"/><rect x="422" y="667" width="1" height="13" fill="#555"/><rect x="518" y="667" width="1" height="13" fill="#555"/><polygon points="1334,673 1338,669.5 1338,676.5" fill="#a8a8a8"/><polygon points="1357,673 1353,669.5 1353,676.5" fill="#a8a8a8"/></svg></body></html>
